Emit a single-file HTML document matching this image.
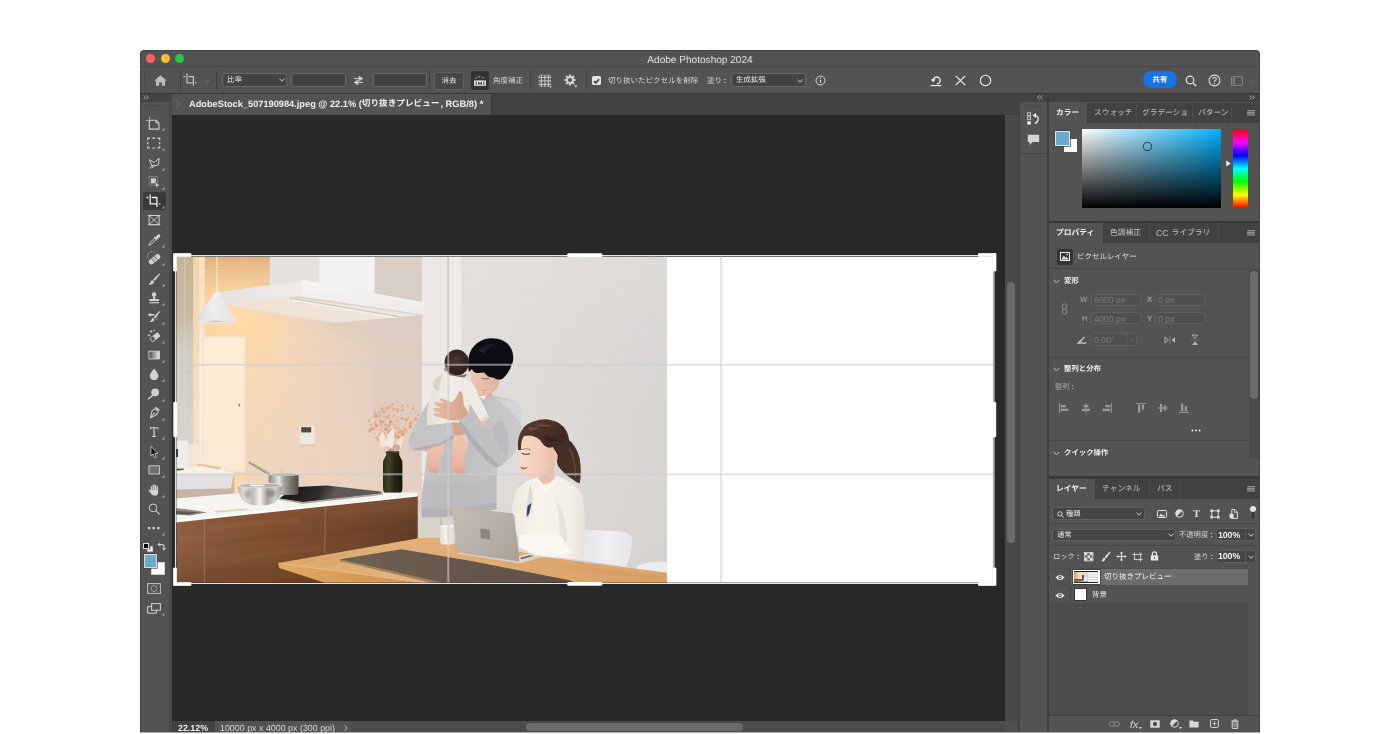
<!DOCTYPE html>
<html lang="ja"><head><meta charset="utf-8"><title>Adobe Photoshop 2024</title>
<style>
html,body{margin:0;padding:0;}
body{width:1400px;height:734px;overflow:hidden;background:#fff;position:relative;
  font-family:"Liberation Sans","Noto Sans CJK JP",sans-serif;font-size:9px;color:#ddd;text-rendering:geometricPrecision;}
body div,body svg{position:absolute;box-sizing:border-box;}
body svg{overflow:visible;}
.r{will-change:transform;display:flex;align-items:center;white-space:nowrap;line-height:1;}
.r.c{justify-content:center;}
.r>svg,.r>span{position:static;flex:none;}
.r>span.j{position:relative;display:block;white-space:nowrap;line-height:1;font-family:"Liberation Sans","Noto Sans CJK JP",sans-serif;}
.fld{background:#454545;border:1px solid #676767;border-radius:2px;}
.sep{width:1px;background:#3e3e3e;}

</style></head>
<body>
<div style="left:140px;top:50px;width:1119.5px;height:700px;background:#535353;border-radius:4.5px 4.5px 0 0;box-shadow:inset 0 0 0 .8px #3f3f3f;"></div><div style="left:145.9px;top:53.8px;width:9px;height:9px;background:#fe5f57;border-radius:50%;"></div><div style="left:160.7px;top:53.8px;width:9px;height:9px;background:#febc2e;border-radius:50%;"></div><div style="left:175.4px;top:53.8px;width:9px;height:9px;background:#28c840;border-radius:50%;"></div><div class="r c" style="left:549.5px;width:300px;top:49.15px;height:20px;"><span id="t1" style="font-size:10.08px;color:#e0e0e0;font-weight:normal;letter-spacing:0px;position:relative;top:1.96px;">Adobe Photoshop 2024</span></div><div style="left:140px;top:66px;width:1119.5px;height:1px;background:#464646;"></div><div style="left:140px;top:93px;width:1119.5px;height:1px;background:#383838;"></div><div style="left:172px;top:94px;width:846px;height:21px;background:#424242;"></div><div style="left:172px;top:94px;width:319px;height:21px;background:#535353;"></div><div style="left:491px;top:94px;width:1px;height:21px;background:#3a3a3a;"></div><svg style="left:176px;top:101px" width="6" height="6" viewBox="0 0 6 6"><path d="M.5 .5L5.5 5.5M5.5 .5L.5 5.5" stroke="#6c6c6c" stroke-width="0.9" fill="none"/></svg><div class="r" style="left:188.8px;top:92.9px;height:20px;"><span id="t2" style="font-size:9.24px;color:#f0f0f0;font-weight:bold;letter-spacing:0px;position:relative;top:1.39px;">AdobeStock_507190984.jpeg @ 22.1% (</span><span class="j" style="width:77.67px;height:8.63px;font-size:8.63px;color:#f0f0f0;font-weight:bold;">切り抜きプレビュー</span><span id="t3" style="font-size:9.3px;color:#f0f0f0;font-weight:bold;letter-spacing:0px;position:relative;top:1.36px;margin-left:1px">, RGB/8) *</span></div><div style="left:172px;top:115px;width:833px;height:606px;background:#282828;"></div><div style="left:172px;top:721px;width:833px;height:11.5px;background:#4a4a4a;"></div><div style="left:172px;top:721px;width:43px;height:11.5px;background:#424242;"></div><div style="left:215px;top:721px;width:136px;height:11.5px;background:#535353;"></div><div class="r" style="left:177.9px;top:717.6px;height:20px;"><span id="t4" style="font-size:8.85px;color:#ececec;font-weight:bold;letter-spacing:0px;position:relative;top:0.71px;">22.12%</span></div><div class="r" style="left:220.4px;top:717.6px;height:20px;"><span id="t5" style="font-size:8.9px;color:#d6d6d6;font-weight:normal;letter-spacing:0px;position:relative;top:-0.04px;">10000 px x 4000 px (300 ppi)</span></div><svg style="left:344px;top:724.6px" width="4" height="6" viewBox="0 0 4 6"><path d="M.8 .5L3 3L.8 5.5" stroke="#ccc" stroke-width="0.9" fill="none"/></svg><div style="left:526px;top:723.2px;width:217px;height:7.6px;background:#6a6a6a;border-radius:4px;"></div><div style="left:1005px;top:115px;width:12.6px;height:617.5px;background:#4a4a4a;"></div><div style="left:1007.2px;top:282px;width:7.7px;height:261px;background:#6a6a6a;border-radius:4px;"></div><div style="left:1005px;top:721px;width:12.6px;height:11.5px;background:#4e4e4e;"></div><svg style="left:0;top:0" width="1400" height="734" viewBox="0 0 1400 734"><defs><clipPath id="pc"><rect x="176" y="256.5" width="491" height="326.5"/></clipPath><filter id="b1" x="-5%" y="-5%" width="110%" height="110%"><feGaussianBlur stdDeviation="0.55"/></filter><filter id="b2" x="-20%" y="-20%" width="140%" height="140%"><feGaussianBlur stdDeviation="1.6"/></filter><filter id="b4" x="-30%" y="-30%" width="160%" height="160%"><feGaussianBlur stdDeviation="4"/></filter><filter id="b8" x="-40%" y="-40%" width="180%" height="180%"><feGaussianBlur stdDeviation="9"/></filter><linearGradient id="wl" gradientUnits="userSpaceOnUse" x1="195" y1="0" x2="424" y2="0"><stop offset="0" stop-color="#f8d3a0"/><stop offset="0.22" stop-color="#fbd9ac"/><stop offset="0.42" stop-color="#f3d6b8"/><stop offset="0.62" stop-color="#ebd2bd"/><stop offset="0.82" stop-color="#e4cebe"/><stop offset="1" stop-color="#ddcbc0"/></linearGradient><radialGradient id="glow" gradientUnits="userSpaceOnUse" cx="236" cy="312" r="60"><stop offset="0" stop-color="#ffdca6" stop-opacity="0.95"/><stop offset="0.6" stop-color="#fdd6a2" stop-opacity="0.5"/><stop offset="1" stop-color="#fdd6a2" stop-opacity="0"/></radialGradient><linearGradient id="topd" gradientUnits="userSpaceOnUse" x1="0" y1="256" x2="0" y2="304"><stop offset="0" stop-color="#c9925a" stop-opacity="0.55"/><stop offset="0.5" stop-color="#d9a56c" stop-opacity="0.28"/><stop offset="1" stop-color="#e8b87e" stop-opacity="0"/></linearGradient><linearGradient id="lowp" gradientUnits="userSpaceOnUse" x1="0" y1="330" x2="0" y2="500"><stop offset="0" stop-color="#eddaca" stop-opacity="0"/><stop offset="1" stop-color="#ecd9ca" stop-opacity="0.35"/></linearGradient><linearGradient id="lowo" gradientUnits="userSpaceOnUse" x1="0" y1="370" x2="0" y2="480"><stop offset="0" stop-color="#ecd2bf" stop-opacity="0"/><stop offset="1" stop-color="#ecd2bf" stop-opacity="0.62"/></linearGradient><linearGradient id="hs" gradientUnits="userSpaceOnUse" x1="330" y1="0" x2="424" y2="0"><stop offset="0" stop-color="#ddd2ca" stop-opacity="0"/><stop offset="1" stop-color="#d9cfc8" stop-opacity="0.6"/></linearGradient><linearGradient id="wr" gradientUnits="userSpaceOnUse" x1="461" y1="0" x2="667" y2="0"><stop offset="0" stop-color="#e2dedb"/><stop offset="0.5" stop-color="#dcd9d6"/><stop offset="1" stop-color="#d7d4d2"/></linearGradient><linearGradient id="wrv" gradientUnits="userSpaceOnUse" x1="0" y1="256" x2="0" y2="583"><stop offset="0" stop-color="#e4e1de" stop-opacity="0.5"/><stop offset="0.5" stop-color="#ddd" stop-opacity="0"/><stop offset="1" stop-color="#cfcbc8" stop-opacity="0.35"/></linearGradient><linearGradient id="wm" gradientUnits="userSpaceOnUse" x1="0" y1="256" x2="0" y2="420"><stop offset="0" stop-color="#d9cfc6"/><stop offset="0.3" stop-color="#d8cdc4"/><stop offset="0.38" stop-color="#dccdc2"/><stop offset="1" stop-color="#e0cdc0"/></linearGradient><linearGradient id="hu" gradientUnits="userSpaceOnUse" x1="228" y1="306" x2="420" y2="318"><stop offset="0" stop-color="#f3e2cd"/><stop offset="0.4" stop-color="#f0e4d8"/><stop offset="1" stop-color="#ebe5df"/></linearGradient><linearGradient id="hl" gradientUnits="userSpaceOnUse" x1="219" y1="0" x2="304" y2="0"><stop offset="0" stop-color="#e6e1dc"/><stop offset="1" stop-color="#efecea"/></linearGradient><linearGradient id="hf" gradientUnits="userSpaceOnUse" x1="0" y1="280" x2="0" y2="315"><stop offset="0" stop-color="#f6f5f4"/><stop offset="1" stop-color="#edebe9"/></linearGradient><linearGradient id="bl" gradientUnits="userSpaceOnUse" x1="0" y1="256" x2="0" y2="445"><stop offset="0" stop-color="#c9b699"/><stop offset="0.3" stop-color="#cabca5"/><stop offset="0.5" stop-color="#d5d0c8"/><stop offset="1" stop-color="#dad7d2"/></linearGradient><pattern id="bs" width="4" height="1.8" patternUnits="userSpaceOnUse"><rect width="4" height=".7" fill="#8b8170" fill-opacity=".13"/></pattern><linearGradient id="st" gradientUnits="userSpaceOnUse" x1="0" y1="256" x2="0" y2="470"><stop offset="0" stop-color="#efd3ab"/><stop offset="0.5" stop-color="#f5ddbc"/><stop offset="1" stop-color="#f3e2d0"/></linearGradient><linearGradient id="dr" gradientUnits="userSpaceOnUse" x1="0" y1="341" x2="0" y2="470"><stop offset="0" stop-color="#feecd3"/><stop offset="1" stop-color="#fbe9d6"/></linearGradient><linearGradient id="lc" gradientUnits="userSpaceOnUse" x1="196" y1="0" x2="236" y2="0"><stop offset="0" stop-color="#dcd8d3"/><stop offset="0.45" stop-color="#f0efee"/><stop offset="1" stop-color="#e6e3e0"/></linearGradient><linearGradient id="vs" gradientUnits="userSpaceOnUse" x1="383" y1="0" x2="402.4" y2="0"><stop offset="0" stop-color="#2c2a19"/><stop offset="0.3" stop-color="#474325"/><stop offset="0.55" stop-color="#2a2817"/><stop offset="1" stop-color="#17160e"/></linearGradient><linearGradient id="wd" gradientUnits="userSpaceOnUse" x1="176" y1="0" x2="418" y2="0"><stop offset="0" stop-color="#8f6044"/><stop offset="0.12" stop-color="#8a5a3c"/><stop offset="0.4" stop-color="#80502f"/><stop offset="0.7" stop-color="#74472b"/><stop offset="1" stop-color="#5f3c27"/></linearGradient><linearGradient id="wdv" gradientUnits="userSpaceOnUse" x1="0" y1="500" x2="0" y2="583"><stop offset="0" stop-color="#a06a45" stop-opacity="0.35"/><stop offset="0.45" stop-color="#7a4a2c" stop-opacity="0"/><stop offset="1" stop-color="#4a2c18" stop-opacity="0.35"/></linearGradient><linearGradient id="hb" gradientUnits="userSpaceOnUse" x1="300" y1="486" x2="330" y2="502"><stop offset="0" stop-color="#1f1d1c"/><stop offset="0.6" stop-color="#2e2c2a"/><stop offset="1" stop-color="#5d5a56"/></linearGradient><linearGradient id="pt" gradientUnits="userSpaceOnUse" x1="268.6" y1="0" x2="298.6" y2="0"><stop offset="0" stop-color="#8e8984"/><stop offset="0.18" stop-color="#b9b5b0"/><stop offset="0.34" stop-color="#e9e7e4"/><stop offset="0.5" stop-color="#aaa6a1"/><stop offset="0.75" stop-color="#77736e"/><stop offset="1" stop-color="#514e4a"/></linearGradient><linearGradient id="bw" gradientUnits="userSpaceOnUse" x1="237" y1="0" x2="283" y2="0"><stop offset="0" stop-color="#b9b4ae"/><stop offset="0.15" stop-color="#dedbd7"/><stop offset="0.35" stop-color="#c3bfb9"/><stop offset="0.5" stop-color="#f1f0ee"/><stop offset="0.66" stop-color="#a7a29c"/><stop offset="0.82" stop-color="#d5d1cc"/><stop offset="1" stop-color="#9a958f"/></linearGradient><linearGradient id="sw" gradientUnits="userSpaceOnUse" x1="408" y1="0" x2="521" y2="0"><stop offset="0" stop-color="#c6c6c8"/><stop offset="0.45" stop-color="#bebec0"/><stop offset="1" stop-color="#cacacc"/></linearGradient><linearGradient id="fc" gradientUnits="userSpaceOnUse" x1="470" y1="0" x2="500" y2="0"><stop offset="0" stop-color="#ecc8b3"/><stop offset="1" stop-color="#deb39b"/></linearGradient><radialGradient id="bh" gradientUnits="userSpaceOnUse" cx="456" cy="360" r="15"><stop offset="0" stop-color="#4a352c"/><stop offset="0.7" stop-color="#33241f"/><stop offset="1" stop-color="#2b1f1b"/></radialGradient><linearGradient id="lg" gradientUnits="userSpaceOnUse" x1="0" y1="436" x2="0" y2="476"><stop offset="0" stop-color="#efc8b3"/><stop offset="0.7" stop-color="#e8b5a2"/><stop offset="1" stop-color="#e19c90"/></linearGradient><linearGradient id="rb" gradientUnits="userSpaceOnUse" x1="427" y1="0" x2="480" y2="0"><stop offset="0" stop-color="#e4dfd6"/><stop offset="0.45" stop-color="#f2eee8"/><stop offset="1" stop-color="#e9e5dd"/></linearGradient><linearGradient id="hd" gradientUnits="userSpaceOnUse" x1="433" y1="0" x2="468" y2="0"><stop offset="0" stop-color="#e5bba1"/><stop offset="1" stop-color="#d6a488"/></linearGradient><linearGradient id="ch" gradientUnits="userSpaceOnUse" x1="582" y1="0" x2="633" y2="0"><stop offset="0" stop-color="#e4e4e7"/><stop offset="0.5" stop-color="#f0f0f2"/><stop offset="1" stop-color="#e6e6e9"/></linearGradient><linearGradient id="hrg" gradientUnits="userSpaceOnUse" x1="520" y1="420" x2="575" y2="480"><stop offset="0" stop-color="#5a3e32"/><stop offset="0.45" stop-color="#402b24"/><stop offset="1" stop-color="#4a3329"/></linearGradient><linearGradient id="bz" gradientUnits="userSpaceOnUse" x1="512" y1="0" x2="585" y2="0"><stop offset="0" stop-color="#efeadf"/><stop offset="0.4" stop-color="#f7f4ec"/><stop offset="0.8" stop-color="#f2eee5"/><stop offset="1" stop-color="#e8e3d9"/></linearGradient><linearGradient id="wf" gradientUnits="userSpaceOnUse" x1="518" y1="0" x2="558" y2="0"><stop offset="0" stop-color="#f7dac8"/><stop offset="0.6" stop-color="#f2cdb8"/><stop offset="1" stop-color="#e6baa4"/></linearGradient><linearGradient id="tb" gradientUnits="userSpaceOnUse" x1="278" y1="0" x2="667" y2="0"><stop offset="0" stop-color="#dca86c"/><stop offset="0.3" stop-color="#e2b27c"/><stop offset="0.6" stop-color="#dda970"/><stop offset="1" stop-color="#d9a066"/></linearGradient><linearGradient id="tf" gradientUnits="userSpaceOnUse" x1="278" y1="0" x2="430" y2="0"><stop offset="0" stop-color="#e2a966"/><stop offset="0.5" stop-color="#d89a56"/><stop offset="1" stop-color="#d39350"/></linearGradient><linearGradient id="pm" gradientUnits="userSpaceOnUse" x1="340" y1="0" x2="560" y2="0"><stop offset="0" stop-color="#6f6053"/><stop offset="0.5" stop-color="#67584c"/><stop offset="1" stop-color="#5c4f45"/></linearGradient><linearGradient id="cp" gradientUnits="userSpaceOnUse" x1="440" y1="0" x2="455.4" y2="0"><stop offset="0" stop-color="#e1ddd4"/><stop offset="0.4" stop-color="#f4f2ec"/><stop offset="1" stop-color="#dcd7cd"/></linearGradient><linearGradient id="lp" gradientUnits="userSpaceOnUse" x1="452" y1="507" x2="520" y2="560"><stop offset="0" stop-color="#c4bcb3"/><stop offset="0.5" stop-color="#b9b1a7"/><stop offset="1" stop-color="#a9a197"/></linearGradient></defs><rect x="176" y="256.5" width="818" height="326.5" fill="#fff"/><g clip-path="url(#pc)"><g filter="url(#b1)"><rect x="176" y="256.5" width="250" height="327" fill="url(#wl)" /><rect x="195" y="256.5" width="140" height="130" fill="url(#glow)" /><rect x="195" y="256.5" width="80" height="50" fill="url(#topd)" /><rect x="244" y="330" width="180" height="170" fill="url(#lowp)" /><rect x="244" y="370" width="110" height="130" fill="url(#lowo)" /><rect x="330" y="300" width="94" height="120" fill="url(#hs)" /><path d="M300.0 318.0L424.0 314.0L424.0 372.0L380.0 350.0Z" fill="#d9c9bd" fill-opacity=".45" filter="url(#b4)"/><rect x="421.8" y="256.5" width="246" height="327" fill="url(#wr)" /><rect x="461" y="256.5" width="206" height="327" fill="url(#wrv)" /><rect x="421.8" y="256.5" width="39.4" height="327" fill="#ebe7e4" /><rect x="447.2" y="256.5" width="1.8" height="327" fill="#d3cfcb" /><rect x="449" y="256.5" width="12" height="327" fill="#eeebe8" /><rect x="374.6" y="256.5" width="47.4" height="170" fill="url(#wm)" /><path d="M269.8 256.5L319.5 256.5L319.5 283.0L303.5 280.0L269.8 284.6Z" fill="#e5e1dd" /><path d="M319.5 256.5L374.6 256.5L374.6 293.0L319.5 283.0Z" fill="#f3f2f1" /><path d="M227.5 305.0L290.0 297.0L424.8 314.9L335.4 322.8Z" fill="url(#hu)" /><path d="M290.0 297.6L398.5 316.0L398.5 317.2L290.0 298.8Z" fill="#c9c6c2" /><path d="M292.0 299.2L398.0 317.4L396.0 318.6L292.0 300.6Z" fill="#f3f1ee" /><path d="M228.7 306.4L335.4 322.4L335.4 323.6L228.7 307.8Z" fill="#e3ddd6" /><path d="M219.0 292.2L303.5 280.0L303.5 295.4L290.0 297.0L227.5 305.0Z" fill="url(#hl)" /><path d="M303.5 280 Q301 280.4 301.2 283 L301.2 296.4 L424.8 314.9 L424.8 302.6 Z" fill="url(#hf)" /><path d="M290.0 297.0L301.2 296.4L424.8 314.9L424.8 316.0L300.0 298.0Z" fill="#d9d5d1" /><rect x="176" y="256.5" width="17.4" height="188.5" fill="url(#bl)" /><rect x="176" y="256.5" width="17.4" height="188.5" fill="none" stroke="none"/><rect x="176" y="256.5" width="17.4" height="188.5" fill="url(#bs)" /><rect x="184.4" y="256.5" width="1" height="188.5" fill="#e5dccd" fill-opacity=".5"/><rect x="193.4" y="256.5" width="11" height="215" fill="url(#st)" /><rect x="199.2" y="256.5" width="5.6" height="215" fill="#f8e6cd" fill-opacity=".8"/><rect x="199.6" y="330" width="2.6" height="141" fill="#f5efe8" fill-opacity=".85"/><rect x="202.6" y="336.6" width="42.6" height="135" fill="#f3e7dc" /><rect x="204.4" y="338.4" width="39" height="131.6" fill="url(#dr)" /><ellipse cx="239.2" cy="405" rx="0.9" ry="1.5" fill="#a68b5c" /><path d="M216.8 256.5V292" stroke="#f3efe9" stroke-width="1.3" stroke-dasharray="2.2 .9" fill="none"/><path d="M216.8 291.6 Q219 291.8 220 293.4 L236.2 320.6 Q236 323.8 216 323.8 Q196.4 323.4 196.2 320.4 L213.8 293.2 Q214.8 291.8 216.8 291.6Z" fill="url(#lc)" /><ellipse cx="216.2" cy="321.6" rx="19.6" ry="2.1" fill="#e9e2e3" /><ellipse cx="216.2" cy="321.4" rx="7" ry="0.7" fill="#d8c4c2" /><rect x="176" y="440.8" width="12.4" height="28.4" fill="#eeedea" rx="1.5"/><rect x="176" y="449" width="2" height="8" fill="#3d3c3a" /><rect x="177" y="468.6" width="7" height="2" fill="#55534f" /><rect x="188.4" y="444" width="12" height="24" fill="#f2e6d6" /><path d="M176.0 471.6L196.0 466.6L233.0 472.4L233.0 474.4L176.0 475.0Z" fill="#f4f0ea" /><path d="M196.0 465.0L199.0 463.6L222.0 467.6L219.0 469.4Z" fill="#e4c79e" /><path d="M176.0 474.4L233.0 473.8L231.0 488.6L176.0 489.6Z" fill="#e2e0e2" /><path d="M176.0 489.6L231.0 488.6L234.0 474.0L234.6 494.0L176.0 499.0Z" fill="#c6b4a6" /><rect x="299.8" y="426" width="14.8" height="18.6" fill="#efe8dd" rx=".8"/><rect x="301.2" y="427.2" width="10" height="5.2" fill="#4b4b49" /><rect x="300.6" y="444.4" width="14" height="1.6" fill="#d8bfa8" fill-opacity=".7"/><g><circle cx="370.8" cy="425.0" r="1.5" fill="#e0a07e" fill-opacity="0.59"/><circle cx="401.6" cy="433.9" r="1.2" fill="#e0a07e" fill-opacity="0.58"/><circle cx="382.0" cy="409.3" r="1.7" fill="#e0a07e" fill-opacity="0.80"/><circle cx="369.2" cy="431.0" r="1.7" fill="#e0a07e" fill-opacity="0.57"/><circle cx="384.3" cy="435.5" r="1.3" fill="#e0a07e" fill-opacity="0.77"/><circle cx="370.8" cy="429.3" r="1.1" fill="#e6ab8b" fill-opacity="0.77"/><circle cx="378.2" cy="439.4" r="1.2" fill="#e2a587" fill-opacity="0.68"/><circle cx="387.4" cy="427.8" r="1.4" fill="#e6ab8b" fill-opacity="0.65"/><circle cx="388.1" cy="405.9" r="1.1" fill="#eabb9f" fill-opacity="0.94"/><circle cx="382.2" cy="411.9" r="1.6" fill="#e6ab8b" fill-opacity="0.72"/><circle cx="370.3" cy="430.8" r="1.1" fill="#db9676" fill-opacity="0.69"/><circle cx="396.9" cy="436.9" r="1.7" fill="#e0a07e" fill-opacity="0.74"/><circle cx="415.7" cy="419.2" r="1.4" fill="#db9676" fill-opacity="0.90"/><circle cx="404.9" cy="430.4" r="0.9" fill="#e2a587" fill-opacity="0.57"/><circle cx="378.7" cy="436.3" r="1.6" fill="#eabb9f" fill-opacity="0.75"/><circle cx="385.8" cy="429.2" r="1.5" fill="#e6ab8b" fill-opacity="0.90"/><circle cx="385.6" cy="426.1" r="1.7" fill="#eabb9f" fill-opacity="0.61"/><circle cx="381.5" cy="433.9" r="1.5" fill="#eabb9f" fill-opacity="0.62"/><circle cx="373.0" cy="428.3" r="1.3" fill="#e2a587" fill-opacity="0.93"/><circle cx="388.4" cy="415.6" r="1.2" fill="#e0a07e" fill-opacity="0.90"/><circle cx="396.8" cy="418.0" r="1.2" fill="#eabb9f" fill-opacity="0.59"/><circle cx="381.6" cy="442.4" r="1.2" fill="#e6ab8b" fill-opacity="0.59"/><circle cx="370.9" cy="429.4" r="0.9" fill="#e2a587" fill-opacity="0.70"/><circle cx="406.6" cy="420.3" r="1.4" fill="#e6ab8b" fill-opacity="0.93"/><circle cx="389.2" cy="434.3" r="1.7" fill="#eabb9f" fill-opacity="0.74"/><circle cx="381.1" cy="441.0" r="1.5" fill="#db9676" fill-opacity="0.74"/><circle cx="390.0" cy="430.8" r="1.1" fill="#e2a587" fill-opacity="0.83"/><circle cx="398.1" cy="428.4" r="1.4" fill="#e0a07e" fill-opacity="0.65"/><circle cx="369.0" cy="420.9" r="1.3" fill="#e2a587" fill-opacity="0.75"/><circle cx="393.8" cy="409.0" r="1.5" fill="#e6ab8b" fill-opacity="0.88"/><circle cx="376.3" cy="425.6" r="1.5" fill="#db9676" fill-opacity="0.95"/><circle cx="388.7" cy="431.5" r="1.7" fill="#e2a587" fill-opacity="0.73"/><circle cx="418.1" cy="415.2" r="0.9" fill="#db9676" fill-opacity="0.59"/><circle cx="381.2" cy="423.4" r="1.6" fill="#e2a587" fill-opacity="0.74"/><circle cx="397.1" cy="436.4" r="1.6" fill="#e0a07e" fill-opacity="0.86"/><circle cx="388.9" cy="432.0" r="0.9" fill="#db9676" fill-opacity="0.93"/><circle cx="384.9" cy="411.6" r="1.5" fill="#e0a07e" fill-opacity="0.62"/><circle cx="394.8" cy="425.5" r="1.3" fill="#e2a587" fill-opacity="0.56"/><circle cx="395.6" cy="435.0" r="1.2" fill="#e6ab8b" fill-opacity="0.90"/><circle cx="380.6" cy="433.9" r="1.3" fill="#db9676" fill-opacity="0.86"/><circle cx="389.5" cy="407.3" r="1.6" fill="#e0a07e" fill-opacity="0.69"/><circle cx="392.0" cy="404.6" r="1.5" fill="#eabb9f" fill-opacity="0.90"/><circle cx="373.7" cy="428.7" r="1.5" fill="#eabb9f" fill-opacity="0.79"/><circle cx="381.4" cy="438.5" r="1.5" fill="#e2a587" fill-opacity="0.77"/><circle cx="388.8" cy="417.8" r="1.6" fill="#e0a07e" fill-opacity="0.57"/><circle cx="380.6" cy="442.2" r="1.3" fill="#eabb9f" fill-opacity="0.85"/><circle cx="384.7" cy="416.6" r="1.3" fill="#e2a587" fill-opacity="0.63"/><circle cx="387.3" cy="408.6" r="1.6" fill="#e2a587" fill-opacity="0.83"/><circle cx="403.2" cy="433.3" r="1.6" fill="#e2a587" fill-opacity="0.63"/><circle cx="385.3" cy="424.9" r="0.9" fill="#db9676" fill-opacity="0.65"/><circle cx="397.3" cy="409.6" r="1.6" fill="#e6ab8b" fill-opacity="0.81"/><circle cx="383.6" cy="436.4" r="1.0" fill="#eabb9f" fill-opacity="0.93"/><circle cx="385.1" cy="402.2" r="0.9" fill="#e6ab8b" fill-opacity="0.72"/><circle cx="384.9" cy="433.0" r="0.9" fill="#db9676" fill-opacity="0.70"/><circle cx="384.9" cy="413.1" r="1.1" fill="#eabb9f" fill-opacity="0.80"/><circle cx="401.0" cy="438.5" r="1.0" fill="#db9676" fill-opacity="0.91"/><circle cx="402.8" cy="409.9" r="1.2" fill="#db9676" fill-opacity="0.76"/><circle cx="388.7" cy="426.4" r="0.9" fill="#db9676" fill-opacity="0.83"/><circle cx="397.1" cy="436.4" r="0.9" fill="#e6ab8b" fill-opacity="0.90"/><circle cx="380.4" cy="420.9" r="1.4" fill="#db9676" fill-opacity="0.57"/><circle cx="415.6" cy="412.0" r="0.8" fill="#db9676" fill-opacity="0.63"/><circle cx="375.9" cy="415.2" r="1.2" fill="#db9676" fill-opacity="0.82"/><circle cx="407.6" cy="405.2" r="0.8" fill="#e0a07e" fill-opacity="0.84"/><circle cx="375.7" cy="428.2" r="0.9" fill="#eabb9f" fill-opacity="0.88"/><circle cx="386.4" cy="407.8" r="1.7" fill="#eabb9f" fill-opacity="0.67"/><circle cx="382.0" cy="435.0" r="1.2" fill="#e6ab8b" fill-opacity="0.69"/><circle cx="382.5" cy="440.8" r="1.2" fill="#db9676" fill-opacity="0.57"/><circle cx="382.8" cy="421.6" r="1.3" fill="#db9676" fill-opacity="0.83"/><circle cx="379.6" cy="434.1" r="1.0" fill="#e0a07e" fill-opacity="0.93"/><circle cx="390.8" cy="429.2" r="1.0" fill="#db9676" fill-opacity="0.62"/><circle cx="377.0" cy="437.0" r="1.0" fill="#e6ab8b" fill-opacity="0.86"/><circle cx="398.2" cy="434.6" r="0.8" fill="#e2a587" fill-opacity="0.56"/><circle cx="375.3" cy="423.3" r="1.6" fill="#e2a587" fill-opacity="0.61"/><circle cx="402.1" cy="418.4" r="1.4" fill="#db9676" fill-opacity="0.75"/><circle cx="393.0" cy="432.9" r="1.4" fill="#e2a587" fill-opacity="0.84"/><circle cx="373.0" cy="428.8" r="1.3" fill="#e2a587" fill-opacity="0.88"/><circle cx="398.4" cy="409.3" r="0.9" fill="#e6ab8b" fill-opacity="0.57"/><circle cx="405.8" cy="430.4" r="1.3" fill="#eabb9f" fill-opacity="0.80"/><circle cx="396.4" cy="420.5" r="1.2" fill="#e0a07e" fill-opacity="0.58"/><circle cx="399.3" cy="437.5" r="0.9" fill="#e2a587" fill-opacity="0.84"/><circle cx="377.1" cy="437.6" r="1.0" fill="#e6ab8b" fill-opacity="0.81"/><circle cx="398.0" cy="437.2" r="1.5" fill="#db9676" fill-opacity="0.80"/><circle cx="379.9" cy="440.2" r="1.4" fill="#db9676" fill-opacity="0.83"/><circle cx="373.7" cy="430.1" r="1.0" fill="#eabb9f" fill-opacity="0.82"/><circle cx="395.2" cy="427.8" r="1.1" fill="#e2a587" fill-opacity="0.74"/><circle cx="410.3" cy="426.7" r="1.7" fill="#db9676" fill-opacity="0.92"/><circle cx="384.2" cy="408.9" r="1.7" fill="#eabb9f" fill-opacity="0.70"/><circle cx="399.7" cy="438.6" r="0.9" fill="#e0a07e" fill-opacity="0.76"/><circle cx="408.5" cy="417.9" r="1.2" fill="#e6ab8b" fill-opacity="0.90"/><circle cx="381.8" cy="413.3" r="1.1" fill="#eabb9f" fill-opacity="0.68"/><circle cx="402.6" cy="431.4" r="0.9" fill="#db9676" fill-opacity="0.71"/><circle cx="401.0" cy="430.6" r="1.6" fill="#e0a07e" fill-opacity="0.66"/><circle cx="381.4" cy="432.5" r="1.1" fill="#e2a587" fill-opacity="0.86"/><circle cx="388.7" cy="437.8" r="1.6" fill="#eabb9f" fill-opacity="0.93"/><circle cx="395.0" cy="436.9" r="1.2" fill="#eabb9f" fill-opacity="0.85"/><circle cx="385.7" cy="438.6" r="0.9" fill="#e2a587" fill-opacity="0.74"/><circle cx="375.9" cy="416.1" r="1.2" fill="#db9676" fill-opacity="0.65"/><circle cx="394.2" cy="434.0" r="0.9" fill="#e6ab8b" fill-opacity="0.75"/><circle cx="390.6" cy="421.5" r="1.7" fill="#db9676" fill-opacity="0.73"/><circle cx="383.2" cy="439.0" r="1.3" fill="#db9676" fill-opacity="0.68"/><circle cx="398.7" cy="432.5" r="1.5" fill="#e0a07e" fill-opacity="0.72"/><circle cx="389.7" cy="424.4" r="1.5" fill="#db9676" fill-opacity="0.75"/><circle cx="379.8" cy="415.8" r="1.4" fill="#e2a587" fill-opacity="0.90"/><circle cx="382.3" cy="432.6" r="1.4" fill="#eabb9f" fill-opacity="0.72"/><circle cx="408.0" cy="406.5" r="0.8" fill="#e6ab8b" fill-opacity="0.83"/><circle cx="386.4" cy="417.1" r="0.9" fill="#e0a07e" fill-opacity="0.92"/><circle cx="389.5" cy="421.0" r="1.0" fill="#eabb9f" fill-opacity="0.59"/><circle cx="388.6" cy="413.1" r="0.9" fill="#eabb9f" fill-opacity="0.86"/><circle cx="371.6" cy="428.3" r="1.4" fill="#e0a07e" fill-opacity="0.67"/><circle cx="375.3" cy="421.1" r="0.9" fill="#e0a07e" fill-opacity="0.67"/><circle cx="379.9" cy="434.2" r="0.8" fill="#e2a587" fill-opacity="0.76"/><circle cx="381.4" cy="430.2" r="1.2" fill="#e6ab8b" fill-opacity="0.64"/><circle cx="412.0" cy="420.9" r="0.8" fill="#db9676" fill-opacity="0.63"/><circle cx="393.5" cy="435.4" r="1.4" fill="#e6ab8b" fill-opacity="0.92"/><circle cx="374.5" cy="437.5" r="1.1" fill="#eabb9f" fill-opacity="0.71"/><circle cx="374.0" cy="412.9" r="1.0" fill="#e0a07e" fill-opacity="0.94"/><circle cx="399.3" cy="431.7" r="1.0" fill="#e6ab8b" fill-opacity="0.91"/><circle cx="394.1" cy="415.7" r="1.2" fill="#e6ab8b" fill-opacity="0.91"/><circle cx="392.8" cy="404.0" r="1.0" fill="#e0a07e" fill-opacity="0.94"/><circle cx="381.6" cy="442.8" r="1.2" fill="#eabb9f" fill-opacity="0.83"/><circle cx="382.1" cy="440.9" r="1.1" fill="#e6ab8b" fill-opacity="0.62"/><circle cx="395.4" cy="437.7" r="1.6" fill="#eabb9f" fill-opacity="0.94"/><circle cx="382.0" cy="441.1" r="1.1" fill="#e0a07e" fill-opacity="0.93"/><circle cx="402.8" cy="435.4" r="1.5" fill="#db9676" fill-opacity="0.67"/><circle cx="390.2" cy="421.7" r="1.1" fill="#db9676" fill-opacity="0.91"/><circle cx="381.3" cy="410.2" r="0.8" fill="#eabb9f" fill-opacity="0.56"/><circle cx="402.6" cy="432.9" r="1.6" fill="#e0a07e" fill-opacity="0.69"/><circle cx="410.2" cy="423.3" r="1.5" fill="#db9676" fill-opacity="0.83"/><circle cx="376.1" cy="416.7" r="1.6" fill="#e2a587" fill-opacity="0.80"/><circle cx="376.9" cy="440.0" r="1.4" fill="#eabb9f" fill-opacity="0.74"/><circle cx="405.8" cy="407.5" r="0.9" fill="#eabb9f" fill-opacity="0.75"/><circle cx="403.7" cy="431.7" r="1.3" fill="#e6ab8b" fill-opacity="0.68"/><circle cx="378.8" cy="412.5" r="1.3" fill="#e0a07e" fill-opacity="0.71"/><circle cx="382.6" cy="416.0" r="1.3" fill="#eabb9f" fill-opacity="0.68"/><circle cx="412.7" cy="408.7" r="1.4" fill="#db9676" fill-opacity="0.63"/><circle cx="418.5" cy="414.8" r="1.0" fill="#e6ab8b" fill-opacity="0.72"/><circle cx="397.4" cy="411.0" r="1.5" fill="#e0a07e" fill-opacity="0.67"/><circle cx="382.1" cy="432.5" r="1.0" fill="#db9676" fill-opacity="0.65"/><circle cx="381.9" cy="426.5" r="1.3" fill="#e6ab8b" fill-opacity="0.64"/><circle cx="397.1" cy="401.8" r="0.8" fill="#e0a07e" fill-opacity="0.90"/><circle cx="386.7" cy="425.2" r="1.0" fill="#db9676" fill-opacity="0.57"/><circle cx="399.1" cy="433.0" r="1.1" fill="#e0a07e" fill-opacity="0.90"/><circle cx="373.3" cy="416.3" r="0.9" fill="#e0a07e" fill-opacity="0.79"/><circle cx="378.6" cy="430.3" r="0.8" fill="#e6ab8b" fill-opacity="0.95"/><circle cx="402.1" cy="405.9" r="1.5" fill="#e0a07e" fill-opacity="0.71"/><circle cx="392.9" cy="435.4" r="1.5" fill="#e0a07e" fill-opacity="0.77"/><circle cx="374.7" cy="433.6" r="0.9" fill="#e2a587" fill-opacity="0.76"/><circle cx="385.8" cy="429.5" r="1.4" fill="#db9676" fill-opacity="0.72"/><circle cx="402.7" cy="407.3" r="1.2" fill="#eabb9f" fill-opacity="0.90"/><circle cx="385.5" cy="432.6" r="1.0" fill="#eabb9f" fill-opacity="0.55"/><circle cx="382.0" cy="409.5" r="1.3" fill="#eabb9f" fill-opacity="0.70"/><circle cx="382.9" cy="441.3" r="1.4" fill="#e6ab8b" fill-opacity="0.91"/><circle cx="393.5" cy="424.5" r="1.0" fill="#e2a587" fill-opacity="0.69"/><circle cx="383.3" cy="440.0" r="1.2" fill="#eabb9f" fill-opacity="0.87"/><circle cx="382.6" cy="437.8" r="1.7" fill="#e0a07e" fill-opacity="0.74"/><circle cx="405.0" cy="429.0" r="1.4" fill="#e2a587" fill-opacity="0.91"/><circle cx="405.9" cy="419.5" r="1.6" fill="#e2a587" fill-opacity="0.88"/><circle cx="378.1" cy="429.4" r="0.9" fill="#e2a587" fill-opacity="0.69"/></g><path d="M392 452Q383.0 428.0 372 404" stroke="#d9a88c" stroke-opacity=".55" stroke-width=".5" fill="none"/><path d="M392 452Q387.0 427.0 380 402" stroke="#d9a88c" stroke-opacity=".55" stroke-width=".5" fill="none"/><path d="M392 452Q393.0 428.0 392 404" stroke="#d9a88c" stroke-opacity=".55" stroke-width=".5" fill="none"/><path d="M392 452Q398.0 430.0 402 408" stroke="#d9a88c" stroke-opacity=".55" stroke-width=".5" fill="none"/><path d="M392 452Q403.0 431.0 412 410" stroke="#d9a88c" stroke-opacity=".55" stroke-width=".5" fill="none"/><path d="M392 452Q406.0 433.0 418 414" stroke="#d9a88c" stroke-opacity=".55" stroke-width=".5" fill="none"/><path d="M392 452Q389.0 435.0 384 418" stroke="#d9a88c" stroke-opacity=".55" stroke-width=".5" fill="none"/><path d="M392 452Q396.0 436.0 398 420" stroke="#d9a88c" stroke-opacity=".55" stroke-width=".5" fill="none"/><path d="M381 447Q377 438 382 431Q387 437 386 447Z" fill="#f1e6d8" /><path d="M386 446Q386 434 393 428Q396 438 392 448Z" fill="#f3eadf" /><path d="M395 446Q400 436 404 436Q403 444 399 450Z" fill="#efe2d4" /><ellipse cx="386.5" cy="449.5" rx="3.2" ry="3" fill="#e9c6bb" /><ellipse cx="396.5" cy="447.5" rx="3.4" ry="3.2" fill="#d8a79f" /><ellipse cx="391" cy="451" rx="3" ry="2.4" fill="#c98f8c" /><path d="M386.4 452Q387 455 384.6 458Q383 460 383 464V488Q383 493.2 386.4 493.4H399Q402.4 493.2 402.4 488V464Q402.4 460 400.8 458Q398.4 455 399 452Z" fill="url(#vs)" /><rect x="386" y="451.2" width="13.4" height="2.2" fill="#3b3820" rx="1"/><path d="M176.0 521.0L417.7 495.6L417.7 583.0L176.0 583.0Z" fill="url(#wd)" /><path d="M176.0 521.0L417.7 495.6L417.7 583.0L176.0 583.0Z" fill="url(#wdv)" /><path d="M210 528Q255.0 522.0 300 520" stroke="#a87650" stroke-opacity="0.35" stroke-width="2.6" fill="none" filter="url(#b2)"/><path d="M206 545Q263.0 536.5 320 532" stroke="#5e3a22" stroke-opacity="0.3" stroke-width="2.6" fill="none" filter="url(#b2)"/><path d="M230 560Q276.0 552.0 322 548" stroke="#a06c46" stroke-opacity="0.25" stroke-width="2.6" fill="none" filter="url(#b2)"/><path d="M330 515Q372.5 508.5 415 506" stroke="#96633f" stroke-opacity="0.3" stroke-width="2.6" fill="none" filter="url(#b2)"/><path d="M330 535Q372.5 526.5 415 522" stroke="#55341f" stroke-opacity="0.3" stroke-width="2.6" fill="none" filter="url(#b2)"/><path d="M208 572Q244.0 567.0 280 566" stroke="#5a371f" stroke-opacity="0.3" stroke-width="2.6" fill="none" filter="url(#b2)"/><path d="M178 540Q190.5 536.5 203 537" stroke="#a87650" stroke-opacity="0.3" stroke-width="2.6" fill="none" filter="url(#b2)"/><path d="M178 560Q190.5 557.0 203 558" stroke="#6a4229" stroke-opacity="0.3" stroke-width="2.6" fill="none" filter="url(#b2)"/><path d="M204.4 518V583" stroke="#b08a72" stroke-opacity=".8" stroke-width=".7"/><path d="M325.4 505.4L324.6 553" stroke="#a88168" stroke-opacity=".8" stroke-width=".7"/><path d="M176.0 498.4L234.0 493.4L417.7 492.6L417.7 495.0L176.0 520.6Z" fill="#f6f4f1" /><path d="M176.0 520.0L417.7 494.4L417.7 496.4L176.0 522.4Z" fill="#fbfaf8" /><path d="M176.0 508.0L196.0 510.4L207.0 512.6L190.0 515.4L176.0 514.6Z" fill="#8e8a84" /><path d="M176.0 511.0L200.0 512.6L188.0 514.6L176.0 514.0Z" fill="#5b5854" /><path d="M214.0 511.0L246.0 508.4L248.0 510.0L217.0 512.8Z" fill="#dfd3c0" /><path d="M296.0 487.0L327.0 485.4L380.4 491.6L382.6 493.6L303.0 502.4L279.0 498.4Z" fill="url(#hb)" /><path d="M279.0 498.2L303.0 502.0L382.6 493.2L382.6 494.8L303.0 503.8L279.0 499.8Z" fill="#aaa6a1" /><path d="M268.6 474.4H298.6V492Q298.6 495 295 495H272Q268.6 495 268.6 492Z" fill="url(#pt)" /><ellipse cx="283.6" cy="474.2" rx="15" ry="1.9" fill="#dedbd7" /><ellipse cx="283.6" cy="474.4" rx="12.6" ry="1.1" fill="#a39f99" /><rect x="280" y="469.6" width="4" height="4" fill="#e1cdb8" rx="1"/><path d="M249.8 462.6L268.8 473.8" stroke="#8d8883" stroke-width="2.2" stroke-linecap="round"/><path d="M250 462.2L268 472.8" stroke="#d8d5d1" stroke-width=".8" stroke-linecap="round"/><path d="M237.6 485.4Q238 497 246 503Q252 505.6 260 505.6Q268 505.6 274 503Q282 497 282.4 485.4Z" fill="url(#bw)" /><ellipse cx="260" cy="485.2" rx="22.6" ry="2.5" fill="#e7e4e0" /><ellipse cx="260" cy="485.5" rx="20" ry="1.7" fill="#b5b0a9" /><ellipse cx="257" cy="485.4" rx="8" ry="1.1" fill="#f1efec" /><ellipse cx="271" cy="493.5" rx="4.6" ry="3.6" fill="#6e6a65" fill-opacity=".6" filter="url(#b2)"/><ellipse cx="248" cy="494" rx="3.2" ry="4" fill="#8a8680" fill-opacity=".5" filter="url(#b2)"/><path d="M418.0 512.0L455.0 512.0L454.0 538.0L418.6 538.0Z" fill="#d9d4ca" /><rect x="440" y="516" width="2.4" height="20" fill="#bdb6aa" fill-opacity=".6"/><path d="M474 397L492 395L508 399L517 402Q521 405 521 412L521 428Q520 445 512 456L501 466L497 468L496.4 509Q470 516 450 516.4Q432 518 422 517.4Q420 500 424 480L427 452L412 449Q407 444 409 438L420 416L433 395L445 388Z" fill="url(#sw)" /><path d="M424 480Q455 490 496.6 476L496.4 509Q470 516 450 516.4Q432 518 422 517.4Q420 500 424 480Z" fill="#b5b6ba" fill-opacity=".45"/><path d="M422 508Q455 512 496.4 502L496.4 509Q460 517 422 517.4Z" fill="#a9aaae" fill-opacity=".5"/><path d="M500 420Q512 430 508 452L501 466L487 462Q498 446 492 428Z" fill="#b3b4b8" fill-opacity=".55"/><path d="M496 398L517 402Q521 405 521 412L521 424Q512 410 496 398Z" fill="#d6d7da" fill-opacity=".8"/><path d="M476 390L492 388L492 396L480 399Z" fill="#d8aa92" /><path d="M478 396.4L487 395L484 399.4Z" fill="#f1f0ee" /><path d="M470 366Q467 362 468.4 358L474 370L500 376Q500.6 387 492 393Q486 397 480 395Q474 392 472 384Q470 376 470 366Z" fill="url(#fc)" /><path d="M480.4 389Q484 391 487.6 389.2Q484 392.2 480.4 389Z" fill="#c47e78" /><path d="M481 378Q485 379.4 489 378.6" fill="none" stroke="#3a2a26" stroke-width=".8" stroke-opacity=".7"/><path d="M468.8 372Q466 355 474 346Q482 337.6 492 338.2Q504 338.4 509.6 346Q514.4 353 512.8 362Q510 372 503 378.4Q498 381 494 378L488 376.4L484 372.4L478 373Q474 373.6 472 369Z" fill="#0c0e13" /><path d="M478 350Q486 342 496 345Q488 347 484 354Z" fill="#1c2733" fill-opacity=".7"/><ellipse cx="456.8" cy="362.6" rx="12.2" ry="13" fill="url(#bh)" /><path d="M447 371Q456 378 467 374Q466 378 458 378.6Q450 378.6 447 371Z" fill="#8a6252" /><ellipse cx="445.8" cy="369" rx="1.6" ry="2.6" fill="#b98a76" /><path d="M428.4 444Q436 440 445 443Q445 452 439 460L438.4 473Q434 475 430 471.6Q426.6 466 428 461Q426.6 452 428.4 444Z" fill="url(#lg)" /><path d="M454.4 432Q462 430 468 436Q469 450 463 460L465.6 474.6Q460 476.4 455 472.6Q449 468 451 464Q452 448 454.4 432Z" fill="url(#lg)" /><path d="M433 383Q437 374 446 374.4L466 378Q474 382 477 392L470 404L466 426L427 425.8Q426 410 430 398Q433 390 433 383Z" fill="url(#rb)" /><path d="M433 383Q436 376 443 375Q439 384 439 391Q434 392 433 383Z" fill="#dad4ca" /><path d="M409 438Q412 430 427.4 425.6L452 422.4L454 434.6L441 442.8L412 449Q407 444 409 438Z" fill="#c4c4c6" /><path d="M412 449L441 442.8L454 434.6L454 437L442 445Q428 450 414 450.6Z" fill="#a9aaae" fill-opacity=".7"/><path d="M451.6 422.4Q460 421 464 427L463.6 434.6Q458 437 454 434.6Z" fill="#d6a58b" /><path d="M468 414.6L460 419.4L458 423.6L471 442.6L487.2 461.8L497 467.4L507 459Q497 440 482 424Z" fill="#c1c1c3" /><path d="M458 423.6L471 442.6L487.2 461.8L497 467.4L499 465Q484 452 474 438Q466 428 460.6 421Z" fill="#a7a8ac" fill-opacity=".7"/><path d="M464 380Q472 381 476 390L488.6 416L481.6 422.6L470 404Q464 394 464 380Z" fill="#f0ece5" /><path d="M487.4 413.6L489.4 417.2L482.4 423.4L480.4 420Z" fill="#e2dcd2" /><ellipse cx="484.2" cy="423.4" rx="3.2" ry="2.4" fill="#e9bfae" /><path d="M459 391.4Q462.6 390.6 462.6 395L464 406Q468.6 412 468 415L460 420Q452 421.6 446 419L436 416.4Q433 415.4 434.4 413.6L441 413.4L434.6 411Q432.4 409.6 434.2 407.8L441 408L435.2 405Q433.6 403.4 435.6 402L444 403L440 400.4Q439.6 398.4 442 398.4L452 402.6Q456.6 398 459 391.4Z" fill="url(#hd)" /><path d="M582 531Q583 529.6 588 529.8L622 531.4Q632 533 632.4 541Q631 556 626 567L582 560Z" fill="url(#ch)" /><path d="M636 566Q650 561 667 562V574H640Z" fill="#ececef" /><path d="M566 438Q576 444 579.6 458Q582 474 579.6 483.6Q576 482 572 479Q564 474 559 467Q564 452 566 438Z" fill="url(#hrg)" /><path d="M569 448Q576 460 575.4 477" fill="none" stroke="#7a5442" stroke-opacity=".6" stroke-width="1.5"/><path d="M541 476Q550 472 560 477Q576 484 583 496Q586 520 583.4 560L540 556L512 530Q510 500 518 488Q526 480 541 476Z" fill="url(#bz)" /><path d="M530 484Q536 500 528 520L526 512Q528 496 530 484Z" fill="#d9d3c6" fill-opacity=".8"/><path d="M527.6 506L531.4 503L529 514L526.4 517Z" fill="#2d3f6a" /><path d="M556 500Q570 520 566 552L560 540Q560 520 556 500Z" fill="#e3ded3" fill-opacity=".7"/><path d="M519 536Q540 528 560 534L572 554L540 557L519 547Z" fill="#f8f6ef" /><path d="M538 470L554 464L555 479Q546 487 538 483Z" fill="#e8c0aa" /><path d="M538 478L546 488L555 478L557 481L546 492L536 481Z" fill="#fbf9f3" /><path d="M521 438Q519.6 443 519.8 448L517.8 457Q518.6 460 520.4 461L520.2 466Q520.6 472 524 475.6Q530 479 538 477Q546 475 551 468L556 458L554 440L540 428L524 430Z" fill="url(#wf)" /><path d="M520.6 466.4Q524 468.4 528.6 466.8Q525 471 520.8 468.6Z" fill="#cf6f70" /><path d="M521.6 453.4Q525.6 455.2 530 453.8" fill="none" stroke="#4a3129" stroke-width="1"/><path d="M521 449.6Q526 447.8 531 449.6" fill="none" stroke="#6a4a3c" stroke-width=".8" stroke-opacity=".7"/><path d="M518 450Q516.5 436 524 427Q534 418.6 548 419.4Q562 421 567 432Q570 440 569 446L559 468Q556 462 556 452L552.6 447Q546 450 540 440Q533 434 524 436Q520.6 440 521 450Z" fill="url(#hrg)" /><path d="M527 428Q540 421 555 427Q541 425 531 432Z" fill="#73503f" fill-opacity=".75"/><path d="M543 436Q556 436 565 444Q556 440 546 441Z" fill="#2f201b" fill-opacity=".6"/><ellipse cx="555.2" cy="457" rx="2.5" ry="4.2" fill="#edc3ad" /><ellipse cx="554.6" cy="464.4" rx="1" ry="1.6" fill="#b9bcc2" /><path d="M531 426L546 428" fill="none" stroke="#201512" stroke-width=".9" stroke-opacity=".7"/><path d="M278.6 563.0L420.0 537.9L455.0 537.4L541.0 556.6L667.0 572.8L667.0 583.4L427.0 583.4Z" fill="url(#tb)" /><path d="M278.6 562.8Q277.6 565 279.3 568L327 583.4L427 583.4Z" fill="url(#tf)" /><path d="M279 563.2L427 583.2" stroke="#efc692" stroke-width="1" stroke-opacity=".8" fill="none"/><path d="M300 562L400 546" stroke="#c98d52" stroke-opacity="0.35" stroke-width="1.4" fill="none" filter="url(#b2)"/><path d="M320 566L345 561" stroke="#b97c45" stroke-opacity="0.35" stroke-width="1.4" fill="none" filter="url(#b2)"/><path d="M470 545L540 560" stroke="#c98d52" stroke-opacity="0.3" stroke-width="1.4" fill="none" filter="url(#b2)"/><path d="M560 566L660 578" stroke="#c4884c" stroke-opacity="0.35" stroke-width="1.4" fill="none" filter="url(#b2)"/><path d="M600 566L667 574" stroke="#e9be8a" stroke-opacity="0.4" stroke-width="1.4" fill="none" filter="url(#b2)"/><path d="M340.0 559.3L401.4 549.3L470.0 560.7L568.3 580.0L578.0 583.4L444.0 583.4L438.6 582.1Z" fill="url(#pm)" /><path d="M340.0 559.3L438.6 582.1L444.0 583.4L434.0 583.4L340.0 561.0Z" fill="#4f433a" fill-opacity=".45"/><path d="M440 526H455.4V541Q455.4 544.4 452 544.4H443.4Q440 544.4 440 541Z" fill="url(#cp)" /><ellipse cx="447.7" cy="526" rx="7.7" ry="1.3" fill="#f6f4ef" /><path d="M453.4 506.8L512 513.2Q514 513.6 514.2 515.6L519.6 561.6L458.4 552.4Q456.8 552 456.6 550.4L452 508.6Q452 506.8 453.4 506.8Z" fill="url(#lp)" /><path d="M480.2 528.4L489.6 529.6L490.2 539.4L480.8 538.2Z" fill="#8d867e" stroke="#a59e95" stroke-width=".5"/><path d="M519.6 561.6L458.4 552.4L458.6 553.8L519.8 563.4L541.0 557.6L540.6 556.0Z" fill="#d5d0ca" /><path d="M519.6 561.6L540.8 555.8L530.0 553.6L518.8 556.0Z" fill="#e3e0dc" /><path d="M520.4 557.4L530.0 555.0L534.0 556.0L521.0 559.4Z" fill="#77736f" /></g></g></svg><svg style="left:0;top:0" width="1400" height="734" viewBox="0 0 1400 734"><path d="M448.3 255.5V583.5" stroke="#cfcfcf" stroke-opacity=".6" stroke-width="2" fill="none"/><path d="M721.2 255.5V583.5" stroke="#cfcfcf" stroke-opacity=".6" stroke-width="2" fill="none"/><path d="M175.5 364.8H994.0" stroke="#cfcfcf" stroke-opacity=".6" stroke-width="2" fill="none"/><path d="M175.5 474.2H994.0" stroke="#cfcfcf" stroke-opacity=".6" stroke-width="2" fill="none"/><rect x="175.5" y="255.5" width="818.5" height="328.0" fill="none" stroke="#2a2a2a" stroke-opacity=".6" stroke-width="2.2"/><rect x="175.5" y="255.5" width="818.5" height="328.0" fill="none" stroke="#e4e4e4" stroke-width="1"/><path d="M173.5 253.5L191.0 253.5L191.0 256.5L176.5 256.5L176.5 271.0L173.5 271.0Z" fill="#fff" stroke="#fff" stroke-width=".7" stroke-linejoin="round"/><path d="M996.0 253.5L978.5 253.5L978.5 256.5L993.0 256.5L993.0 271.0L996.0 271.0Z" fill="#fff" stroke="#fff" stroke-width=".7" stroke-linejoin="round"/><path d="M173.5 585.5L191.0 585.5L191.0 582.5L176.5 582.5L176.5 568.0L173.5 568.0Z" fill="#fff" stroke="#fff" stroke-width=".7" stroke-linejoin="round"/><path d="M996.0 585.5L978.5 585.5L978.5 582.5L993.0 582.5L993.0 568.0L996.0 568.0Z" fill="#fff" stroke="#fff" stroke-width=".7" stroke-linejoin="round"/><rect x="567.0" y="253.3" width="35.6" height="3.8" rx="1.6" fill="#fff"/><rect x="567.0" y="581.9" width="35.6" height="3.8" rx="1.6" fill="#fff"/><rect x="173.3" y="401.7" width="3.8" height="35.6" rx="1.6" fill="#fff"/><rect x="992.4" y="401.7" width="3.8" height="35.6" rx="1.6" fill="#fff"/></svg><div style="left:143.6px;top:72.5px;width:1.4px;height:14.5px;background:repeating-linear-gradient(#454545 0 1px,transparent 1px 2px);"></div><svg style="left:154.3px;top:75.0px;" width="13" height="11" viewBox="0 0 13 11"><path d="M6.5 .3L.2 5.8H2V10.8H5.1V7.4H7.9V10.8H11V5.8H12.8Z" fill="#bdbdbd"/></svg><div style="left:179.5px;top:71px;width:1px;height:19px;background:#404040;"></div><svg style="left:183.3px;top:73.3px;" width="14" height="14" viewBox="0 0 14 14"><path d="M4 .6V9.8H9.6M5.6 3.6H10.4V12.8M.4 3.6H2.2M12.2 9.8H13.6" stroke="#c4c4c4" stroke-width="1.2" fill="none"/></svg><svg style="left:204.0px;top:79.0px;" width="6" height="4" viewBox="0 0 6 4"><path d="M.5 .6L3 3.2L5.5 .6" stroke="#6c6c6c" stroke-width="1" fill="none"/></svg><div style="left:215.6px;top:71px;width:1px;height:19px;background:#404040;"></div><div style="left:222px;top:73px;width:65.2px;height:13.8px;background:#444;border:1px solid #686868;border-radius:2.5px;"></div><div class="r" style="left:227.4px;top:70.0px;height:20px;"><span class="j" style="width:14.80px;height:7.4px;font-size:7.4px;color:#e8e8e8;">比率</span></div><svg style="left:279.4px;top:78.4px;" width="6" height="4" viewBox="0 0 6 4"><path d="M.5 .6L3 3.2L5.5 .6" stroke="#ccc" stroke-width="1" fill="none"/></svg><div style="left:291.3px;top:73px;width:54.5px;height:13.8px;background:#444;border:1px solid #686868;border-radius:2.5px;"></div><svg style="left:353.1px;top:75.5px;" width="11" height="9" viewBox="0 0 11 9"><path d="M1 2.6H8M6.2 .4L9.6 2.6L6.2 4.8Z M10 6.4H3M4.8 4.2L1.4 6.4L4.8 8.6Z" stroke="#d0d0d0" stroke-width="1" fill="#d0d0d0" stroke-linejoin="round"/></svg><div style="left:372.8px;top:73px;width:53.8px;height:13.8px;background:#444;border:1px solid #686868;border-radius:2.5px;"></div><div style="left:429.4px;top:71px;width:1px;height:19px;background:#404040;"></div><div style="left:434.2px;top:71.8px;width:29.6px;height:17.8px;background:#474747;border:1px solid #606060;border-radius:3px;"></div><div class="r c" style="left:299px;width:300px;top:70.6px;height:20px;"><span class="j" style="width:14.80px;height:7.4px;font-size:7.4px;color:#e0e0e0;">消去</span></div><div style="left:471.3px;top:71.4px;width:18.2px;height:18.6px;background:#333;border-radius:2.5px;"></div><svg style="left:473.4px;top:75.5px;" width="14" height="11" viewBox="0 0 14 11"><path d="M1 4.4H13V9.8H1Z" fill="#e2e2e2"/><path d="M3.2 5.2V9M10.8 5.2V9" stroke="#333" stroke-width=".9"/><path d="M5 6.2H9V8.4H5Z" fill="#333"/><path d="M5.6 6.8H8.4" stroke="#e2e2e2" stroke-width=".7"/><path d="M2 2.8C4 .2 10 .2 12 2.8" stroke="#cfcfcf" stroke-width=".9" stroke-dasharray="1.1 1.1" fill="none"/></svg><div class="r" style="left:493px;top:70.6px;height:20px;"><span class="j" style="width:30.00px;height:7.5px;font-size:7.5px;color:#d6d6d6;">角度補正</span></div><div style="left:529.5px;top:71px;width:1px;height:19px;background:#404040;"></div><svg style="left:538.4px;top:73.6px;" width="14" height="14" viewBox="0 0 14 14"><path d="M3.4 .8V13M6.9 .8V13M10.4 .8V13M.6 3.4H13M.6 6.9H13M.6 10.4H13" stroke="#cdcdcd" stroke-width="1" fill="none"/><path d="M1.2 1.2H12.6V12.6H1.2Z" stroke="#cdcdcd" stroke-width=".8" stroke-dasharray="1 1" fill="none"/><path d="M11.4 12.6h2.4l-1.2 1.4z" fill="#cdcdcd"/></svg><svg style="left:563.8px;top:74.2px;" width="12" height="12" viewBox="0 0 12 12"><path d="M9.60 6.00L11.60 6.00" stroke="#d4d4d4" stroke-width="2" /><path d="M8.55 8.55L9.96 9.96" stroke="#d4d4d4" stroke-width="2" /><path d="M6.00 9.60L6.00 11.60" stroke="#d4d4d4" stroke-width="2" /><path d="M3.45 8.55L2.04 9.96" stroke="#d4d4d4" stroke-width="2" /><path d="M2.40 6.00L0.40 6.00" stroke="#d4d4d4" stroke-width="2" /><path d="M3.45 3.45L2.04 2.04" stroke="#d4d4d4" stroke-width="2" /><path d="M6.00 2.40L6.00 0.40" stroke="#d4d4d4" stroke-width="2" /><path d="M8.55 3.45L9.96 2.04" stroke="#d4d4d4" stroke-width="2" /><circle cx="6" cy="6" r="3" fill="none" stroke="#d4d4d4" stroke-width="1.9"/></svg><svg style="left:573.6px;top:85.1px;" width="4" height="3" viewBox="0 0 4 3"><path d="M0 .4h3.6L1.8 2.6z" fill="#d4d4d4"/></svg><div style="left:585.8px;top:71px;width:1px;height:19px;background:#404040;"></div><div style="left:592.3px;top:76.3px;width:8.6px;height:8.6px;background:#e4e4e4;border-radius:1.6px;"></div><svg style="left:593.1px;top:77.6px;" width="7" height="6" viewBox="0 0 7 6"><path d="M1 3.1L2.8 4.9L6 1.2" stroke="#333" stroke-width="1.5" fill="none"/></svg><div class="r" style="left:607.6px;top:70.6px;height:20px;"><span class="j" style="width:90.24px;height:7.52px;font-size:7.52px;color:#d6d6d6;">切り抜いたピクセルを削除</span></div><div class="r" style="left:706.5px;top:70.6px;height:20px;"><span class="j" style="width:15.00px;height:7.5px;font-size:7.5px;color:#d6d6d6;">塗り</span><span id="t6" style="font-size:8px;color:#d6d6d6;font-weight:bold;letter-spacing:0px;margin-left:1.5px">:</span></div><div style="left:730.7px;top:73.2px;width:75px;height:14px;background:#444;border:1px solid #686868;border-radius:2.5px;"></div><div class="r" style="left:736.2px;top:70.4px;height:20px;"><span class="j" style="width:29.80px;height:7.45px;font-size:7.45px;color:#e8e8e8;">生成拡張</span></div><svg style="left:797.4px;top:78.8px;" width="6" height="4" viewBox="0 0 6 4"><path d="M.5 .6L3 3.2L5.5 .6" stroke="#ccc" stroke-width="1" fill="none"/></svg><svg style="left:814.5px;top:75.1px;" width="11" height="11" viewBox="0 0 11 11"><circle cx="5.5" cy="5.5" r="4.5" fill="none" stroke="#d6d6d6" stroke-width="1"/><path d="M5.5 4.8V8" stroke="#d6d6d6" stroke-width="1.1"/><circle cx="5.5" cy="3.3" r=".7" fill="#d6d6d6"/></svg><svg style="left:929.7px;top:73.9px;" width="13" height="13" viewBox="0 0 13 13"><path d="M3.2 6.8A3.5 3.5 0 1 1 6.8 10" stroke="#f2f2f2" stroke-width="1.3" fill="none"/><path d="M.8 5.2H5.6L3.2 8.2Z" fill="#f2f2f2"/><path d="M.6 11.6H11.4" stroke="#f2f2f2" stroke-width="1.1"/></svg><svg style="left:954.8px;top:74.9px;" width="11" height="11" viewBox="0 0 11 11"><path d="M.8 .8L10.2 10.2M10.2 .8L.8 10.2" stroke="#f0f0f0" stroke-width="1.2"/></svg><svg style="left:979.4px;top:73.9px;" width="13" height="13" viewBox="0 0 13 13"><circle cx="6.5" cy="6.5" r="5.2" fill="none" stroke="#f0f0f0" stroke-width="1.1"/></svg><div style="left:1142.6px;top:71.4px;width:34.6px;height:17px;background:#1473e6;border-radius:9px;"></div><div class="r c" style="left:1010px;width:300px;top:70.2px;height:20px;"><span class="j" style="width:14.80px;height:7.4px;font-size:7.4px;color:#fff;font-weight:bold;">共有</span></div><svg style="left:1184.8px;top:74.6px;" width="12" height="12" viewBox="0 0 12 12"><circle cx="5" cy="5" r="3.8" fill="none" stroke="#e0e0e0" stroke-width="1.2"/><path d="M7.8 7.8L11.2 11.2" stroke="#e0e0e0" stroke-width="1.4"/></svg><svg style="left:1208.0px;top:74.1px;" width="13" height="13" viewBox="0 0 13 13"><circle cx="6.5" cy="6.5" r="5.4" fill="none" stroke="#e0e0e0" stroke-width="1.1"/><path d="M4.8 5.2C4.8 3 8.3 3 8.3 5.1C8.3 6.4 6.5 6.4 6.5 7.9" stroke="#e0e0e0" stroke-width="1.1" fill="none"/><circle cx="6.5" cy="9.6" r=".7" fill="#e0e0e0"/></svg><svg style="left:1231.0px;top:75.6px;" width="12" height="10" viewBox="0 0 12 10"><rect x=".5" y=".7" width="11" height="8.6" rx=".4" fill="none" stroke="#868686" stroke-width="1"/><path d="M1.8 2H3.8V8H1.8Z" fill="#868686"/></svg><svg style="left:1250.2px;top:79.0px;" width="6" height="4" viewBox="0 0 6 4"><path d="M.5 .6L3 3.2L5.5 .6" stroke="#666" stroke-width="1" fill="none"/></svg><div style="left:140.5px;top:94px;width:29.5px;height:8px;background:#424242;"></div><div style="left:169px;top:94px;width:3px;height:638.5px;background:#4a4a4a;"></div><svg style="left:143.2px;top:95.3px;" width="6" height="5" viewBox="0 0 6 5"><path d="M.6 .6L2.6 2.5L.6 4.4M3.4 .6L5.4 2.5L3.4 4.4" stroke="#c2c2c2" stroke-width=".8" fill="none"/></svg><div style="left:147px;top:105.2px;width:15px;height:2.2px;background:repeating-linear-gradient(90deg,#484848 0 1px,transparent 1px 2px);"></div><div style="left:143px;top:192.4px;width:23px;height:17.2px;background:#393939;border-radius:2.5px;"></div><svg style="left:147.2px;top:115.9px;" width="14.2" height="14.2" viewBox="0 0 16 16"><path d="M-1 5H1.4M2.8 1.6V3.6" stroke="#d2d2d2" fill="none" stroke-width="1"/><path d="M2.6 4.8H10.4L13.4 7.8V14.8H2.6Z" stroke="#d2d2d2" fill="none" stroke-width="1.25"/><path d="M10.2 5V8H13.2" stroke="#d2d2d2" fill="none" stroke-width="1"/></svg><svg style="left:161.7px;top:128.0px;" width="2.4" height="2.4" viewBox="0 0 2.4 2.4"><path d="M2.4 0V2.4H0Z" fill="#b4b4b4"/></svg><svg style="left:147.2px;top:135.9px;" width="14.2" height="14.2" viewBox="0 0 16 16"><path d="M.8 4.8V2.4H3.4M6 2.4H9.2M11.8 2.4H14.3V4.8M14.3 6.8V9.2M14.3 11.2V13.6H11.8M9.2 13.6H6M3.4 13.6H.8V11.2M.8 9.2V6.8" stroke="#d2d2d2" fill="none" stroke-width="1.25"/></svg><svg style="left:161.7px;top:148.0px;" width="2.4" height="2.4" viewBox="0 0 2.4 2.4"><path d="M2.4 0V2.4H0Z" fill="#b4b4b4"/></svg><svg style="left:147.2px;top:155.6px;" width="14.2" height="14.2" viewBox="0 0 16 16"><path d="M2.6 4.2L8.2 7.4L13.6 2.6L12.8 10.2L5.6 11.4Z" stroke="#d2d2d2" fill="none" stroke-width="1.1" stroke-linejoin="round"/><path d="M7.4 9.6L2.4 14.2M4.8 13.6L8 11.8" stroke="#d2d2d2" fill="none" stroke-width="1"/></svg><svg style="left:161.7px;top:167.7px;" width="2.4" height="2.4" viewBox="0 0 2.4 2.4"><path d="M2.4 0V2.4H0Z" fill="#b4b4b4"/></svg><svg style="left:147.2px;top:174.6px;" width="14.2" height="14.2" viewBox="0 0 16 16"><rect x="2.4" y="1.8" width="9.6" height="9.6" stroke="#d2d2d2" fill="none" stroke-width=".8" stroke-dasharray="1 1"/><rect x="4.4" y="3.8" width="5.6" height="5.6" fill="#d2d2d2"/><path d="M9 7.6L14.6 12L11.8 12.4L10.2 14.8Z" fill="#d2d2d2" stroke="#535353" stroke-width=".5"/></svg><svg style="left:161.7px;top:186.7px;" width="2.4" height="2.4" viewBox="0 0 2.4 2.4"><path d="M2.4 0V2.4H0Z" fill="#b4b4b4"/></svg><svg style="left:147.2px;top:193.9px;" width="14.2" height="14.2" viewBox="0 0 16 16"><path d="M3.6 .5V11.2H10.4M5.4 3.95H11.15V14.6M-.6 3.95H1.5M13.5 11.2H15.1" stroke="#f4f4f4" fill="none" stroke-width="1.45"/></svg><svg style="left:161.7px;top:206.0px;" width="2.4" height="2.4" viewBox="0 0 2.4 2.4"><path d="M2.4 0V2.4H0Z" fill="#b4b4b4"/></svg><svg style="left:147.2px;top:213.1px;" width="14.2" height="14.2" viewBox="0 0 16 16"><rect x="2.4" y="2.8" width="11.2" height="10.4" stroke="#d2d2d2" fill="none" stroke-width="1.1"/><path d="M2.4 2.8L13.6 13.2M13.6 2.8L2.4 13.2M1 2.8H15M1 13.2H15" stroke="#d2d2d2" fill="none" stroke-width=".9"/></svg><svg style="left:147.2px;top:232.9px;" width="14.2" height="14.2" viewBox="0 0 16 16"><path d="M2.2 13.8L3 11.4L8.6 5.8L10.2 7.4L4.6 13Z" stroke="#d2d2d2" fill="none" stroke-width="1.1" stroke-linejoin="round"/><path d="M8 4.4L11.6 8M9.2 6.2L12 2.6Q13.4 1.6 14.2 2.6Q14.8 3.6 13.6 4.6L10.6 7.2" stroke="#d2d2d2" fill="#d2d2d2" stroke-width="1.2"/></svg><svg style="left:161.7px;top:245.0px;" width="2.4" height="2.4" viewBox="0 0 2.4 2.4"><path d="M2.4 0V2.4H0Z" fill="#b4b4b4"/></svg><svg style="left:147.2px;top:251.3px;" width="14.2" height="14.2" viewBox="0 0 16 16"><path d="M1.6 8.6A4.6 4.6 0 0 1 9 2.6" stroke="#d2d2d2" fill="none" stroke-width="1" stroke-dasharray="1.2 1.2"/><g transform="rotate(-38 8.4 9.4)"><rect x="1" y="6.4" width="14.8" height="6" rx="3" fill="#d2d2d2"/><path d="M6.2 6.4V12.4M10.6 6.4V12.4" stroke="#535353" stroke-width=".9"/><circle cx="8.4" cy="8.4" r=".55" fill="#535353"/><circle cx="8.4" cy="10.4" r=".55" fill="#535353"/></g></svg><svg style="left:161.7px;top:263.4px;" width="2.4" height="2.4" viewBox="0 0 2.4 2.4"><path d="M2.4 0V2.4H0Z" fill="#b4b4b4"/></svg><svg style="left:147.2px;top:271.5px;" width="14.2" height="14.2" viewBox="0 0 16 16"><path d="M13.8 1.6Q14.8 1.8 14.4 2.8L8.8 10.2L6.8 8.6Z" fill="#d2d2d2"/><path d="M6.2 9.4L8 10.9Q7.6 13.6 3.6 14.4Q1.8 14.6 2 13.8Q4 12.6 4.2 11Q4.6 9.4 6.2 9.4Z" fill="#d2d2d2"/></svg><svg style="left:161.7px;top:283.6px;" width="2.4" height="2.4" viewBox="0 0 2.4 2.4"><path d="M2.4 0V2.4H0Z" fill="#b4b4b4"/></svg><svg style="left:147.2px;top:290.8px;" width="14.2" height="14.2" viewBox="0 0 16 16"><circle cx="8" cy="4" r="2.6" fill="#d2d2d2"/><path d="M6.8 6H9.2V9H13.4V11.4H2.6V9H6.8Z" fill="#d2d2d2"/><path d="M2.6 13.2H13.4" stroke="#d2d2d2" stroke-width="1.3"/></svg><svg style="left:161.7px;top:302.9px;" width="2.4" height="2.4" viewBox="0 0 2.4 2.4"><path d="M2.4 0V2.4H0Z" fill="#b4b4b4"/></svg><svg style="left:147.2px;top:310.0px;" width="14.2" height="14.2" viewBox="0 0 16 16"><path d="M13.6 1.2Q14.6 1.4 14.2 2.4L9.4 9.6L7.6 8.2Z" fill="#d2d2d2"/><path d="M7 9L8.6 10.3Q8.2 12.8 4.8 13.6Q3.2 13.8 3.4 13Q5 12 5.2 10.6Q5.6 9 7 9Z" fill="#d2d2d2"/><path d="M1 5.4L4.2 3V4.6H8.4V6.2H4.2V7.8Z" fill="#d2d2d2"/><path d="M10.8 8.4Q12 10.6 10.6 12.6" stroke="#d2d2d2" fill="none" stroke-width=".8" stroke-dasharray="1 1"/></svg><svg style="left:161.7px;top:322.1px;" width="2.4" height="2.4" viewBox="0 0 2.4 2.4"><path d="M2.4 0V2.4H0Z" fill="#b4b4b4"/></svg><svg style="left:147.2px;top:328.9px;" width="14.2" height="14.2" viewBox="0 0 16 16"><g transform="rotate(-38 8.6 9.4)"><rect x="3.2" y="6.6" width="11.6" height="5.8" rx="1.2" fill="#d2d2d2"/><rect x="4" y="7.4" width="4" height="4.2" rx=".6" fill="#535353"/></g><path d="M4.6 1.2V4.4M3 2.8H6.2M2.2 6V8.4M1 7.2H3.4M7.8 .8V2.6M6.9 1.7H8.7" stroke="#d2d2d2" fill="none" stroke-width=".9"/></svg><svg style="left:161.7px;top:341.0px;" width="2.4" height="2.4" viewBox="0 0 2.4 2.4"><path d="M2.4 0V2.4H0Z" fill="#b4b4b4"/></svg><svg style="left:0;top:0" width="0" height="0"><defs><linearGradient id="tg"><stop offset="0" stop-color="#4a4a4a"/><stop offset="1" stop-color="#e8e8e8"/></linearGradient></defs></svg><svg style="left:147.2px;top:347.7px;" width="14.2" height="14.2" viewBox="0 0 16 16"><rect x="2.2" y="3.6" width="11.8" height="8.8" fill="url(#tg)" stroke="#d2d2d2" stroke-width="1"/></svg><svg style="left:161.7px;top:359.8px;" width="2.4" height="2.4" viewBox="0 0 2.4 2.4"><path d="M2.4 0V2.4H0Z" fill="#b4b4b4"/></svg><svg style="left:147.2px;top:367.1px;" width="14.2" height="14.2" viewBox="0 0 16 16"><path d="M8 1.6Q12.9 7.4 12.9 10.2A4.9 4.6 0 0 1 3.1 10.2Q3.1 7.4 8 1.6Z" fill="#d2d2d2"/></svg><svg style="left:161.7px;top:379.2px;" width="2.4" height="2.4" viewBox="0 0 2.4 2.4"><path d="M2.4 0V2.4H0Z" fill="#b4b4b4"/></svg><svg style="left:147.2px;top:386.9px;" width="14.2" height="14.2" viewBox="0 0 16 16"><circle cx="9.2" cy="6" r="4.4" fill="#d2d2d2"/><path d="M6.4 9.2L1.2 13.8" stroke="#d2d2d2" stroke-width="1.5"/></svg><svg style="left:161.7px;top:399.0px;" width="2.4" height="2.4" viewBox="0 0 2.4 2.4"><path d="M2.4 0V2.4H0Z" fill="#b4b4b4"/></svg><svg style="left:147.2px;top:405.9px;" width="14.2" height="14.2" viewBox="0 0 16 16"><g transform="rotate(38 8 8)"><path d="M8 14.6L4.6 7.4L5.6 3.6H10.4L11.4 7.4Z" stroke="#d2d2d2" fill="none" stroke-width="1.1" stroke-linejoin="round"/><path d="M8 14V9.2" stroke="#d2d2d2" fill="none" stroke-width=".9"/><circle cx="8" cy="8.4" r="1" fill="#d2d2d2"/><path d="M5.2 1.2H10.8V2.8H5.2Z" fill="#d2d2d2"/></g></svg><svg style="left:161.7px;top:418.0px;" width="2.4" height="2.4" viewBox="0 0 2.4 2.4"><path d="M2.4 0V2.4H0Z" fill="#b4b4b4"/></svg><svg style="left:147.2px;top:424.9px;" width="14.2" height="14.2" viewBox="0 0 16 16"><path d="M3.4 2.6H12.6V5.2H11.6V3.8H8.7V12.4H10.2V13.4H5.8V12.4H7.3V3.8H4.4V5.2H3.4Z" fill="#d2d2d2"/></svg><svg style="left:161.7px;top:437.0px;" width="2.4" height="2.4" viewBox="0 0 2.4 2.4"><path d="M2.4 0V2.4H0Z" fill="#b4b4b4"/></svg><svg style="left:147.2px;top:445.1px;" width="14.2" height="14.2" viewBox="0 0 16 16"><path d="M4.4 1.6L12.4 9.4H8.6L10.6 13.8L8.8 14.6L6.8 10.2L4.4 12.6Z" fill="#111" stroke="#d2d2d2" stroke-width=".9" stroke-linejoin="round"/></svg><svg style="left:161.7px;top:457.2px;" width="2.4" height="2.4" viewBox="0 0 2.4 2.4"><path d="M2.4 0V2.4H0Z" fill="#b4b4b4"/></svg><svg style="left:147.2px;top:462.9px;" width="14.2" height="14.2" viewBox="0 0 16 16"><rect x="2.2" y="3.2" width="11.8" height="9.2" fill="#6e6e6e" stroke="#d2d2d2" stroke-width="1"/></svg><svg style="left:161.7px;top:475.0px;" width="2.4" height="2.4" viewBox="0 0 2.4 2.4"><path d="M2.4 0V2.4H0Z" fill="#b4b4b4"/></svg><svg style="left:147.2px;top:483.2px;" width="14.2" height="14.2" viewBox="0 0 16 16"><g fill="#d2d2d2"><rect x="4.3" y="3.4" width="1.75" height="7" rx=".85"/><rect x="6.45" y="1.6" width="1.75" height="8" rx=".85"/><rect x="8.6" y="1.8" width="1.75" height="8" rx=".85"/><rect x="10.75" y="3.4" width="1.75" height="7" rx=".85"/><path d="M4.3 8H12.5V10.4Q12.5 14.4 8.6 14.4Q6.2 14.4 4.8 12.4L1.8 8.4Q1.6 7.2 2.8 7.2Q3.6 7.4 4.3 8.6Z"/></g></svg><svg style="left:161.7px;top:495.3px;" width="2.4" height="2.4" viewBox="0 0 2.4 2.4"><path d="M2.4 0V2.4H0Z" fill="#b4b4b4"/></svg><svg style="left:147.2px;top:501.9px;" width="14.2" height="14.2" viewBox="0 0 16 16"><circle cx="6.8" cy="6.6" r="4.3" stroke="#d2d2d2" fill="none" stroke-width="1.1"/><path d="M10 9.8L14.2 14" stroke="#d2d2d2" stroke-width="1.3"/></svg><svg style="left:147.2px;top:521.2px;" width="14.2" height="14.2" viewBox="0 0 16 16"><circle cx="2.4" cy="8" r="1.5" fill="#d2d2d2"/><circle cx="7.6" cy="8" r="1.5" fill="#d2d2d2"/><circle cx="12.8" cy="8" r="1.5" fill="#d2d2d2"/></svg><svg style="left:161.7px;top:533.3px;" width="2.4" height="2.4" viewBox="0 0 2.4 2.4"><path d="M2.4 0V2.4H0Z" fill="#b4b4b4"/></svg><div style="left:142.6px;top:542.6px;width:6.6px;height:6.6px;background:#000;border:0.8px solid #ddd;"></div><svg style="left:146.8px;top:545.6px;" width="6" height="6" viewBox="0 0 6 6"><path d="M.4 3.4V5.6H5.6V.4H3.4V3.4Z" fill="#fff" stroke="#ccc" stroke-width=".6"/></svg><div style="left:142.6px;top:542.6px;width:6.8px;height:6.8px;background:#000;border:0.8px solid #ddd;"></div><svg style="left:156.7px;top:541.5px;" width="9" height="9" viewBox="0 0 9 9"><path d="M2.2 2.6H5Q7 2.6 7 4.6V7" stroke="#d2d2d2" fill="none" stroke-width="1.1"/><path d="M2.6 .6L.4 2.6L2.6 4.6ZM5 6.2L7 8.6L9 6.2Z" fill="#d2d2d2"/></svg><div style="left:150.6px;top:562.2px;width:14.4px;height:13.2px;background:#fff;border:0.6px solid #cfcfcf;"></div><div style="left:144px;top:554.2px;width:13.4px;height:14px;background:#6aabcc;border:1px solid #d9d9d9;box-shadow:0 0 0 .6px #444;"></div><svg style="left:146.5px;top:583.3px;" width="14" height="11" viewBox="0 0 14 11"><rect x=".6" y=".6" width="12.8" height="9.8" stroke="#d2d2d2" fill="none" stroke-width="1" stroke-opacity=".85"/><circle cx="7" cy="5.5" r="3" stroke="#d2d2d2" fill="none" stroke-width=".9" stroke-opacity=".6"/></svg><svg style="left:146.5px;top:602.5px;" width="14" height="11" viewBox="0 0 14 11"><rect x="4.6" y=".6" width="8.8" height="6.6" fill="#535353" stroke="#d2d2d2" stroke-width="1"/><path d="M4.6 3.6H.6V10.2H9.4V7.2" stroke="#d2d2d2" fill="none" stroke-width="1"/></svg><svg style="left:161.7px;top:613.4px;" width="2.4" height="2.4" viewBox="0 0 2.4 2.4"><path d="M2.4 0V2.4H0Z" fill="#b4b4b4"/></svg><div style="left:1017.6px;top:94px;width:2px;height:638.5px;background:#434343;"></div><div style="left:1046.7px;top:94px;width:2px;height:638.5px;background:#3e3e3e;"></div><div style="left:1019.6px;top:94px;width:27.1px;height:8px;background:#424242;"></div><div style="left:1048.7px;top:94px;width:210.79999999999995px;height:8.4px;background:#424242;"></div><svg style="left:1037.0px;top:95.3px;" width="6" height="5" viewBox="0 0 6 5"><path d="M2.6 .6L.6 2.5L2.6 4.4M5.4 .6L3.4 2.5L5.4 4.4" stroke="#c2c2c2" stroke-width=".8" fill="none"/></svg><svg style="left:1248.6px;top:95.3px;" width="6" height="5" viewBox="0 0 6 5"><path d="M.6 .6L2.6 2.5L.6 4.4M3.4 .6L5.4 2.5L3.4 4.4" stroke="#c2c2c2" stroke-width=".8" fill="none"/></svg><div style="left:1025.6px;top:105.4px;width:15px;height:2.2px;background:repeating-linear-gradient(90deg,#494949 0 1px,transparent 1px 2px);"></div><div style="left:1019.6px;top:152.6px;width:27.1px;height:1.2px;background:#454545;"></div><svg style="left:1026.0px;top:112.0px;" width="14" height="14" viewBox="0 0 14 14"><rect x="1.6" y=".8" width="3" height="2.8" fill="none" stroke="#d8d8d8" stroke-width=".8"/><rect x="1.6" y="4.9" width="3" height="2.8" fill="none" stroke="#d8d8d8" stroke-width=".8"/><rect x="1.4" y="9.2" width="3.4" height="3.4" fill="#e6e6e6"/><path d="M8.4 3.4Q12.6 3.6 12.2 7.4Q11.8 10.4 8.8 11.6" stroke="#e6e6e6" stroke-width="1.3" fill="none"/><path d="M6.6 3.6L10 .8L10 6Z" fill="#e6e6e6"/></svg><svg style="left:1026.5px;top:134.0px;" width="13" height="12" viewBox="0 0 13 12"><path d="M.8 .8H12.2V8H5.6L2.6 11V8H.8Z" fill="#d6d6d6"/></svg><div style="left:1048.7px;top:102.5px;width:210.79999999999995px;height:20.3px;background:#424242;"></div><div style="left:1048.7px;top:102.5px;width:37.9px;height:21.3px;background:#535353;"></div><div class="r" style="left:1055.6px;top:102.6px;height:20px;"><span class="j" style="width:23.10px;height:7.7px;font-size:7.7px;color:#f2f2f2;font-weight:bold;">カラー</span></div><div class="r" style="left:1093.6px;top:102.6px;height:20px;"><span class="j" style="width:38.50px;height:7.7px;font-size:7.7px;color:#c4c4c4;">スウォッチ</span></div><div class="r" style="left:1142.4px;top:102.6px;height:20px;"><span class="j" style="width:46.20px;height:7.7px;font-size:7.7px;color:#c4c4c4;">グラデーショ</span></div><div class="r" style="left:1198.2px;top:102.6px;height:20px;"><span class="j" style="width:30.80px;height:7.7px;font-size:7.7px;color:#c4c4c4;">パターン</span></div><div style="left:1135.6px;top:102.5px;width:1px;height:20.3px;background:#4c4c4c;"></div><div style="left:1191.5px;top:102.5px;width:1px;height:20.3px;background:#4c4c4c;"></div><div style="left:1231.2px;top:102.5px;width:1px;height:20.3px;background:#4c4c4c;"></div><div style="left:1190.2px;top:104px;width:1.6px;height:18px;background:#424242;"></div><svg style="left:1247.4px;top:109.6px;" width="8" height="6" viewBox="0 0 8 6"><path d="M0 .8H8M0 2.9H8M0 5H8" stroke="#a8a8a8" stroke-width="1.1"/></svg><div style="left:1048.7px;top:221px;width:210.79999999999995px;height:1.8px;background:#383838;"></div><div style="left:1064px;top:139px;width:13.2px;height:13.2px;background:#fff;"></div><div style="left:1055.4px;top:130.6px;width:15px;height:15px;background:#6aabcc;border:1px solid #e6e6e6;box-shadow:0 0 0 .7px #3c3c3c;"></div><div style="left:1082.2px;top:128.5px;width:138.5px;height:79.2px;background:linear-gradient(to top,#000,rgba(0,0,0,0)),linear-gradient(to right,#fff,#00b2ff);"></div><svg style="left:1142.2px;top:141.1px;" width="11" height="11" viewBox="0 0 11 11"><circle cx="5.5" cy="5.5" r="4.1" fill="none" stroke="#1d2a33" stroke-width=".9"/></svg><div style="left:1233.2px;top:128.5px;width:14.5px;height:79.2px;background:linear-gradient(to bottom,#f00 0%,#f0f 16.7%,#00f 33.3%,#0ff 50%,#0f0 66.7%,#ff0 83.3%,#f00 100%);"></div><svg style="left:1226.1px;top:160.1px;" width="5" height="7" viewBox="0 0 5 7"><path d="M.3 .6L4.6 3.5L.3 6.4Z" fill="#f4f4f4"/></svg><div style="left:1048.7px;top:223px;width:210.79999999999995px;height:20.3px;background:#424242;"></div><div style="left:1048.7px;top:223px;width:54.3px;height:21.3px;background:#535353;"></div><div class="r" style="left:1056px;top:223.2px;height:20px;"><span class="j" style="width:38.75px;height:7.75px;font-size:7.75px;color:#f2f2f2;font-weight:bold;">プロパティ</span></div><div class="r" style="left:1109.6px;top:223.2px;height:20px;"><span class="j" style="width:31.00px;height:7.75px;font-size:7.75px;color:#c4c4c4;">色調補正</span></div><div class="r" style="left:1156.2px;top:223.2px;height:20px;"><span id="t7" style="font-size:8.6px;color:#c4c4c4;font-weight:normal;letter-spacing:0px;position:relative;top:0.45px;margin-right:3.2px">CC</span><span class="j" style="width:38.75px;height:7.75px;font-size:7.75px;color:#c4c4c4;">ライブラリ</span></div><div style="left:1149.4px;top:223px;width:1px;height:20.3px;background:#4c4c4c;"></div><div style="left:1218.2px;top:223px;width:1px;height:20.3px;background:#4c4c4c;"></div><svg style="left:1247.4px;top:230.4px;" width="8" height="6" viewBox="0 0 8 6"><path d="M0 .8H8M0 2.9H8M0 5H8" stroke="#a8a8a8" stroke-width="1.1"/></svg><div style="left:1057.2px;top:249px;width:15.6px;height:15.6px;background:#363636;border-radius:2px;"></div><svg style="left:1060.0px;top:252.3px;" width="10" height="9" viewBox="0 0 10 9"><rect x=".5" y=".5" width="9" height="8" fill="none" stroke="#ececec" stroke-width="1"/><path d="M1.4 7.6L3.8 3.6L5.6 6L6.8 4.8L8.6 7.6Z" fill="#ececec"/><circle cx="7.2" cy="2.6" r=".8" fill="#ececec"/></svg><div class="r" style="left:1077.2px;top:247.2px;height:20px;"><span class="j" style="width:60.00px;height:7.5px;font-size:7.5px;color:#dedede;">ピクセルレイヤー</span></div><div style="left:1048.7px;top:268.2px;width:201px;height:1px;background:#474747;"></div><div style="left:1248.6px;top:269.2px;width:10.9px;height:188.5px;background:#4b4b4b;"></div><div style="left:1250px;top:271.4px;width:8.2px;height:128px;background:#6b6b6b;border-radius:4px;"></div><svg style="left:1053.4px;top:279.1px;" width="7" height="5" viewBox="0 0 7 5"><path d="M.6 .8L3.5 3.8L6.4 .8" stroke="#c8c8c8" stroke-width="1" fill="none"/></svg><div class="r" style="left:1064.4px;top:271.4px;height:20px;"><span class="j" style="width:14.80px;height:7.4px;font-size:7.4px;color:#ededed;font-weight:bold;">変形</span></div><div style="left:1091px;top:293.6px;width:49.6px;height:12.2px;background:#4f4f4f;border:1px solid #606060;border-radius:2.5px;"></div><div style="left:1155.4px;top:293.6px;width:49.6px;height:12.2px;background:#4f4f4f;border:1px solid #606060;border-radius:2.5px;"></div><div style="left:1091px;top:312.2px;width:49.6px;height:12.2px;background:#4f4f4f;border:1px solid #606060;border-radius:2.5px;"></div><div style="left:1155.4px;top:312.2px;width:49.6px;height:12.2px;background:#4f4f4f;border:1px solid #606060;border-radius:2.5px;"></div><div class="r" style="left:1080.4px;top:289.9px;height:20px;"><span id="t8" style="font-size:7.8px;color:#8e8e8e;font-weight:bold;letter-spacing:0px;position:relative;top:-0.11px;">W</span></div><div class="r" style="left:1082.2px;top:308.5px;height:20px;"><span id="t9" style="font-size:7.8px;color:#8e8e8e;font-weight:bold;letter-spacing:0px;position:relative;top:0.11px;">H</span></div><div class="r" style="left:1147.2px;top:289.9px;height:20px;"><span id="t10" style="font-size:7.8px;color:#9a9a9a;font-weight:bold;letter-spacing:0px;position:relative;top:-0.14px;">X</span></div><div class="r" style="left:1147.2px;top:308.5px;height:20px;"><span id="t11" style="font-size:7.8px;color:#9a9a9a;font-weight:bold;letter-spacing:0px;position:relative;top:0.16px;">Y</span></div><div class="r" style="left:1093.8px;top:290.0px;height:20px;"><span id="t12" style="font-size:8.8px;color:#7a7a7a;font-weight:normal;letter-spacing:0px;position:relative;top:0.17px;">6000 px</span></div><div class="r" style="left:1093.8px;top:308.6px;height:20px;"><span id="t13" style="font-size:8.8px;color:#7a7a7a;font-weight:normal;letter-spacing:0px;position:relative;top:0.34px;">4000 px</span></div><div class="r" style="left:1158.2px;top:290.0px;height:20px;"><span id="t14" style="font-size:8.8px;color:#7a7a7a;font-weight:normal;letter-spacing:0px;position:relative;top:0.14px;">0 px</span></div><div class="r" style="left:1158.2px;top:308.6px;height:20px;"><span id="t15" style="font-size:8.8px;color:#7a7a7a;font-weight:normal;letter-spacing:0px;position:relative;top:0.34px;">0 px</span></div><svg style="left:1060.9px;top:302.8px;" width="7" height="12" viewBox="0 0 7 12"><rect x="1.4" y=".8" width="4.2" height="5.4" rx="2.1" fill="none" stroke="#8c8c8c" stroke-width="1"/><rect x="1.4" y="5.8" width="4.2" height="5.4" rx="2.1" fill="none" stroke="#8c8c8c" stroke-width="1"/></svg><svg style="left:1076.6px;top:336.2px;" width="10" height="8" viewBox="0 0 10 8"><path d="M9.4 7.2H.9L7.6 1" stroke="#c4c4c4" stroke-width="1.2" fill="none"/><path d="M4.6 7Q4.6 5 3.4 4.2" stroke="#c4c4c4" stroke-width=".9" fill="none"/></svg><div style="left:1091px;top:333.2px;width:46.4px;height:13px;background:#4f4f4f;border:1px solid #606060;border-radius:2.5px;"></div><div style="left:1126.4px;top:334.2px;width:1px;height:11px;background:#606060;"></div><div class="r" style="left:1093.8px;top:330.0px;height:20px;"><span id="t16" style="font-size:8.8px;color:#7a7a7a;font-weight:normal;letter-spacing:0px;position:relative;top:0.19px;">0.00°</span></div><svg style="left:1129.0px;top:338.4px;" width="6" height="4" viewBox="0 0 6 4"><path d="M.5 .6L3 3.2L5.5 .6" stroke="#6e6e6e" stroke-width="1" fill="none"/></svg><svg style="left:1164.0px;top:336.0px;" width="12" height="8" viewBox="0 0 12 8"><path d="M1 1L4.4 4L1 7Z" fill="none" stroke="#b5b5b5" stroke-width=".9"/><path d="M11 1L7.6 4L11 7Z" fill="#b5b5b5"/><path d="M6 0V8" stroke="#8a8a8a" stroke-width=".8"/></svg><svg style="left:1191.4px;top:334.0px;" width="8" height="12" viewBox="0 0 8 12"><path d="M1 1L4 4.4L7 1Z" fill="none" stroke="#b5b5b5" stroke-width=".9"/><path d="M1 11L4 7.6L7 11Z" fill="#b5b5b5"/><path d="M0 6H8" stroke="#8a8a8a" stroke-width=".8" stroke-dasharray="1 .8"/></svg><div style="left:1048.7px;top:356.6px;width:200px;height:1px;background:#474747;"></div><svg style="left:1053.4px;top:367.1px;" width="7" height="5" viewBox="0 0 7 5"><path d="M.6 .8L3.5 3.8L6.4 .8" stroke="#c8c8c8" stroke-width="1" fill="none"/></svg><div class="r" style="left:1064.4px;top:359.4px;height:20px;"><span class="j" style="width:37.00px;height:7.4px;font-size:7.4px;color:#ededed;font-weight:bold;">整列と分布</span></div><div class="r" style="left:1054.8px;top:376.6px;height:20px;"><span class="j" style="width:14.60px;height:7.3px;font-size:7.3px;color:#ababab;">整列</span><span id="t17" style="font-size:8px;color:#ababab;font-weight:bold;letter-spacing:0px;margin-left:1.6px">:</span></div><svg style="left:1059.2px;top:402.5px;" width="10" height="10" viewBox="0 0 10 10"><path d="M.6 0V10" stroke="#9a9a9a" stroke-width="1"/><path d="M1.8 2H6.8V4.2H1.8ZM1.8 5.8H9.4V8H1.8Z" fill="#9a9a9a"/></svg><svg style="left:1080.8px;top:402.5px;" width="10" height="10" viewBox="0 0 10 10"><path d="M5 0V10" stroke="#9a9a9a" stroke-width="1"/><path d="M2.6 2H7.4V4.2H2.6ZM1 5.8H9V8H1Z" fill="#9a9a9a"/></svg><svg style="left:1102.1px;top:402.5px;" width="10" height="10" viewBox="0 0 10 10"><path d="M9.4 0V10" stroke="#9a9a9a" stroke-width="1"/><path d="M3.2 2H8.2V4.2H3.2ZM.6 5.8H8.2V8H.6Z" fill="#9a9a9a"/></svg><svg style="left:1136.0px;top:402.5px;" width="10" height="10" viewBox="0 0 10 10"><path d="M0 .6H10" stroke="#9a9a9a" stroke-width="1"/><path d="M2 1.8H4.2V9.4H2ZM5.8 1.8H8V6.8H5.8Z" fill="#9a9a9a"/></svg><svg style="left:1157.6px;top:402.5px;" width="10" height="10" viewBox="0 0 10 10"><path d="M0 5H10" stroke="#9a9a9a" stroke-width="1"/><path d="M2 1H4.2V9H2ZM5.8 2.6H8V7.4H5.8Z" fill="#9a9a9a"/></svg><svg style="left:1179.4px;top:402.5px;" width="10" height="10" viewBox="0 0 10 10"><path d="M0 9.4H10" stroke="#9a9a9a" stroke-width="1"/><path d="M2 .6H4.2V8.2H2ZM5.8 3.2H8V8.2H5.8Z" fill="#9a9a9a"/></svg><svg style="left:1191.4px;top:428.7px;" width="10" height="3" viewBox="0 0 10 3"><circle cx="1.4" cy="1.5" r="1" fill="#e8e8e8"/><circle cx="5" cy="1.5" r="1" fill="#e8e8e8"/><circle cx="8.6" cy="1.5" r="1" fill="#e8e8e8"/></svg><div style="left:1048.7px;top:439.8px;width:200px;height:1px;background:#474747;"></div><svg style="left:1053.4px;top:451.0px;" width="7" height="5" viewBox="0 0 7 5"><path d="M.6 .8L3.5 3.8L6.4 .8" stroke="#c8c8c8" stroke-width="1" fill="none"/></svg><div class="r" style="left:1064.4px;top:443.3px;height:20px;"><span class="j" style="width:44.40px;height:7.4px;font-size:7.4px;color:#ededed;font-weight:bold;">クイック操作</span></div><div style="left:1048.7px;top:476.2px;width:210.79999999999995px;height:2.4px;background:#383838;"></div><div style="left:1048.7px;top:478.6px;width:210.79999999999995px;height:20.4px;background:#424242;"></div><div style="left:1048.7px;top:478.6px;width:46.3px;height:21.4px;background:#535353;"></div><div class="r" style="left:1056px;top:478.9px;height:20px;"><span class="j" style="width:31.00px;height:7.75px;font-size:7.75px;color:#f2f2f2;font-weight:bold;">レイヤー</span></div><div class="r" style="left:1101.6px;top:478.9px;height:20px;"><span class="j" style="width:38.75px;height:7.75px;font-size:7.75px;color:#c4c4c4;">チャンネル</span></div><div class="r" style="left:1156.6px;top:478.9px;height:20px;"><span class="j" style="width:15.50px;height:7.75px;font-size:7.75px;color:#c4c4c4;">パス</span></div><div style="left:1148.8px;top:478.6px;width:1px;height:20.4px;background:#4c4c4c;"></div><div style="left:1179px;top:478.6px;width:1px;height:20.4px;background:#4c4c4c;"></div><svg style="left:1247.4px;top:486.0px;" width="8" height="6" viewBox="0 0 8 6"><path d="M0 .8H8M0 2.9H8M0 5H8" stroke="#a8a8a8" stroke-width="1.1"/></svg><div style="left:1051.8px;top:507.2px;width:92.8px;height:13px;background:#454545;border:1px solid #5e5e5e;border-radius:2.5px;"></div><svg style="left:1057.3px;top:510.5px;" width="7" height="7" viewBox="0 0 7 7"><circle cx="2.9" cy="2.9" r="2.2" fill="none" stroke="#e0e0e0" stroke-width=".9"/><path d="M4.6 4.6L6.6 6.6" stroke="#e0e0e0" stroke-width="1"/></svg><div class="r" style="left:1066.4px;top:503.9px;height:20px;"><span class="j" style="width:14.60px;height:7.3px;font-size:7.3px;color:#e8e8e8;">種類</span></div><svg style="left:1136.0px;top:512.4px;" width="6" height="4" viewBox="0 0 6 4"><path d="M.5 .6L3 3.2L5.5 .6" stroke="#ccc" stroke-width="1" fill="none"/></svg><svg style="left:1156.7px;top:509.9px;" width="10" height="8" viewBox="0 0 10 8"><rect x=".5" y=".5" width="9" height="7" rx=".8" fill="none" stroke="#dedede" stroke-width="1"/><path d="M1.8 6.4L3.8 3.4L5.2 5.2L6.2 4.4L8 6.4Z" fill="#dedede"/></svg><svg style="left:1175.1px;top:509.4px;" width="9" height="9" viewBox="0 0 9 9"><circle cx="4.5" cy="4.5" r="3.8" fill="none" stroke="#dedede" stroke-width="1"/><path d="M1.8 7.2A3.8 3.8 0 0 1 7.2 1.8Z" fill="#dedede"/></svg><div class="r" style="left:1193.2px;top:504.0px;height:20px;"><span id="t18" style="font-size:10.5px;color:#dedede;font-weight:bold;letter-spacing:0px;position:relative;top:1.39px;font-family:'Liberation Serif',serif">T</span></div><svg style="left:1210.0px;top:508.9px;" width="10" height="10" viewBox="0 0 10 10"><rect x="1.8" y="1.8" width="6.4" height="6.4" fill="none" stroke="#dedede" stroke-width="1"/><path d="M.4 .4H3V3H.4ZM7 .4H9.6V3H7ZM.4 7H3V9.6H.4ZM7 7H9.6V9.6H7Z" fill="#dedede"/></svg><svg style="left:1228.5px;top:508.9px;" width="9" height="10" viewBox="0 0 9 10"><path d="M2.8 .6H6L8.4 3V9.4H2.8Z" fill="none" stroke="#dedede" stroke-width="1"/><path d="M.6 4.8H4.6V9.4H.6Z" fill="#dedede"/><path d="M5.6 .8V3.4H8.2" fill="none" stroke="#dedede" stroke-width=".8"/></svg><div style="left:1250.2px;top:507.6px;width:6px;height:12.2px;background:#3d3d3d;border-radius:3px;border:.6px solid #5e5e5e;"></div><div style="left:1250.2px;top:505.6px;width:6px;height:6px;background:#e8e8e8;border-radius:50%;"></div><div style="left:1048.7px;top:523px;width:210.79999999999995px;height:1px;background:#494949;"></div><div style="left:1048.7px;top:545px;width:210.79999999999995px;height:1px;background:#494949;"></div><div style="left:1051.8px;top:528.6px;width:124.6px;height:12.6px;background:#454545;border:1px solid #5e5e5e;border-radius:2.5px;"></div><div class="r" style="left:1056.6px;top:525.0px;height:20px;"><span class="j" style="width:14.60px;height:7.3px;font-size:7.3px;color:#e8e8e8;">通常</span></div><svg style="left:1168.0px;top:533.4px;" width="6" height="4" viewBox="0 0 6 4"><path d="M.5 .6L3 3.2L5.5 .6" stroke="#ccc" stroke-width="1" fill="none"/></svg><div class="r" style="left:1178.8px;top:525.0px;height:20px;"><span class="j" style="width:29.20px;height:7.3px;font-size:7.3px;color:#d6d6d6;">不透明度</span><span id="t19" style="font-size:8px;color:#d6d6d6;font-weight:bold;letter-spacing:0px;margin-left:2px">:</span></div><div style="left:1215.6px;top:528.2px;width:40.2px;height:13.2px;background:#454545;border:1px solid #5e5e5e;border-radius:2.5px;"></div><div style="left:1244.8px;top:529.0px;width:1px;height:11.6px;background:#5a5a5a;"></div><div class="r" style="left:1218.4px;top:525.1px;height:20px;"><span id="t20" style="font-size:8.8px;color:#f2f2f2;font-weight:bold;letter-spacing:-0.1px;position:relative;top:0.57px;">100%</span></div><svg style="left:1247.8px;top:533.4px;" width="6" height="4" viewBox="0 0 6 4"><path d="M.5 .6L3 3.2L5.5 .6" stroke="#ccc" stroke-width="1" fill="none"/></svg><div class="r" style="left:1053px;top:546.8px;height:20px;"><span class="j" style="width:21.90px;height:7.3px;font-size:7.3px;color:#d6d6d6;">ロック</span><span id="t21" style="font-size:8px;color:#d6d6d6;font-weight:bold;letter-spacing:0px;margin-left:2.2px">:</span></div><svg style="left:1084.3px;top:552.1px;" width="9.4" height="9.4" viewBox="0 0 9.4 9.4"><rect x="0.8" y="0.8" width="2.6" height="2.6" fill="#e4e4e4"/><rect x="3.4" y="0.8" width="2.6" height="2.6" fill="#777"/><rect x="6.0" y="0.8" width="2.6" height="2.6" fill="#e4e4e4"/><rect x="0.8" y="3.4" width="2.6" height="2.6" fill="#777"/><rect x="3.4" y="3.4" width="2.6" height="2.6" fill="#e4e4e4"/><rect x="6.0" y="3.4" width="2.6" height="2.6" fill="#777"/><rect x="0.8" y="6.0" width="2.6" height="2.6" fill="#e4e4e4"/><rect x="3.4" y="6.0" width="2.6" height="2.6" fill="#777"/><rect x="6.0" y="6.0" width="2.6" height="2.6" fill="#e4e4e4"/><rect x=".5" y=".5" width="8.4" height="8.4" fill="none" stroke="#e4e4e4" stroke-width=".8"/></svg><svg style="left:1100.8px;top:551.1px;" width="10" height="11" viewBox="0 0 10 11"><path d="M8.6 .6Q9.6 .8 9.2 1.8L5 7.4L3.6 6.2Z" fill="#e8e8e8"/><path d="M3.2 6.8L4.4 7.9Q4.2 9.8 1.6 10.4Q.4 10.6.6 10Q1.8 9.2 2 8Q2.2 6.8 3.2 6.8Z" fill="#e8e8e8"/></svg><svg style="left:1115.5px;top:551.3px;" width="11" height="11" viewBox="0 0 11 11"><path d="M5.5 .4L7.2 2.4H6.1V4.9H8.6V3.8L10.6 5.5L8.6 7.2V6.1H6.1V8.6H7.2L5.5 10.6L3.8 8.6H4.9V6.1H2.4V7.2L.4 5.5L2.4 3.8V4.9H4.9V2.4H3.8Z" fill="#e0e0e0"/></svg><svg style="left:1132.1px;top:551.8px;" width="11" height="10" viewBox="0 0 11 10"><path d="M2.6 .4V8M.4 2.4H8.6V9.6M2.6 7.6H10.6" stroke="#dedede" stroke-width=".9" fill="none"/><path d="M7.4 .8L10.2 2.6" stroke="#dedede" stroke-width=".9"/></svg><svg style="left:1149.5px;top:551.4px;" width="9" height="10" viewBox="0 0 9 10"><path d="M2.4 4.4V3Q2.4 .8 4.5 .8Q6.6 .8 6.6 3V4.4" stroke="#e8e8e8" stroke-width="1.2" fill="none"/><rect x=".8" y="4.2" width="7.4" height="5.4" rx=".6" fill="#e8e8e8"/><rect x="4" y="5.8" width="1" height="2" fill="#535353"/></svg><div class="r" style="left:1194px;top:546.8px;height:20px;"><span class="j" style="width:14.60px;height:7.3px;font-size:7.3px;color:#d6d6d6;">塗り</span><span id="t22" style="font-size:8px;color:#d6d6d6;font-weight:bold;letter-spacing:0px;margin-left:2px">:</span></div><div style="left:1215.6px;top:549.6px;width:40.2px;height:13.2px;background:#454545;border:1px solid #5e5e5e;border-radius:2.5px;"></div><div style="left:1244.8px;top:550.4px;width:1px;height:11.6px;background:#5a5a5a;"></div><div class="r" style="left:1218.4px;top:546.5px;height:20px;"><span id="t23" style="font-size:8.8px;color:#f2f2f2;font-weight:bold;letter-spacing:-0.1px;position:relative;top:-0.23px;">100%</span></div><svg style="left:1247.8px;top:554.8px;" width="6" height="4" viewBox="0 0 6 4"><path d="M.5 .6L3 3.2L5.5 .6" stroke="#ccc" stroke-width="1" fill="none"/></svg><div style="left:1048.7px;top:567.6px;width:199.4px;height:147px;background:#4d4d4d;"></div><div style="left:1048.7px;top:568.6px;width:199.4px;height:16.4px;background:#535353;"></div><div style="left:1071.4px;top:568.6px;width:176.7px;height:16.4px;background:#6c6c6c;"></div><div style="left:1048.7px;top:586px;width:199.4px;height:17.4px;background:#535353;"></div><div style="left:1070.4px;top:568.6px;width:1px;height:34.8px;background:#474747;"></div><svg style="left:1055.0px;top:573.7px;" width="10" height="7" viewBox="0 0 10 7"><path d="M.4 3.5Q5 -1.6 9.6 3.5Q5 8.6 .4 3.5Z" fill="#ececec"/><circle cx="5" cy="3.5" r="1.7" fill="#535353"/><circle cx="5" cy="3.5" r=".8" fill="#ececec"/></svg><svg style="left:1055.0px;top:591.5px;" width="10" height="7" viewBox="0 0 10 7"><path d="M.4 3.5Q5 -1.6 9.6 3.5Q5 8.6 .4 3.5Z" fill="#ececec"/><circle cx="5" cy="3.5" r="1.7" fill="#535353"/><circle cx="5" cy="3.5" r=".8" fill="#ececec"/></svg><div style="left:1072.6px;top:569.8px;width:27px;height:14.2px;background:#fff;box-shadow:0 0 0 .6px #2c2c2c;"></div><div style="left:1073.8px;top:571px;width:24.6px;height:11.8px;background:#222;"></div><div style="left:1074.4px;top:571.6px;width:23.4px;height:10.6px;background:repeating-conic-gradient(#cfcfcf 0 25%,#fff 0 50%) 0 0/2.6px 2.6px;"></div><div style="left:1074.4px;top:571.6px;width:14px;height:10.6px;background:linear-gradient(90deg,#d8a26a,#f3d9b8 40%,#e6dcd4 62%,#d9d6d3);"></div><div style="left:1074.4px;top:578.6px;width:8.6px;height:3.6px;background:#8a5a3a;"></div><div style="left:1081.6px;top:575.4px;width:2.6px;height:5px;background:#555a66;"></div><div style="left:1084px;top:577px;width:3px;height:4.4px;background:#efeae0;"></div><div style="left:1077px;top:580.6px;width:11.4px;height:1.6px;background:#d29a60;"></div><div class="r" style="left:1103.9px;top:567.2px;height:20px;"><span class="j" style="width:67.50px;height:7.5px;font-size:7.5px;color:#f0f0f0;">切り抜きプレビュー</span></div><div style="left:1074.8px;top:589.2px;width:11.2px;height:11px;background:#fff;box-shadow:0 0 0 .7px #2c2c2c;"></div><div class="r" style="left:1091.8px;top:585.0px;height:20px;"><span class="j" style="width:14.80px;height:7.4px;font-size:7.4px;color:#e2e2e2;">背景</span></div><div style="left:1048.7px;top:714.6px;width:210.79999999999995px;height:1px;background:#404040;"></div><svg style="left:1108.8px;top:720.9px;" width="11" height="6" viewBox="0 0 11 6"><rect x=".5" y=".8" width="5.4" height="4.4" rx="2.2" fill="none" stroke="#8a8a8a" stroke-width="1"/><rect x="5.1" y=".8" width="5.4" height="4.4" rx="2.2" fill="none" stroke="#8a8a8a" stroke-width="1"/></svg><div class="r" style="left:1129.6px;top:714.2px;height:20px;"><span id="t24" style="font-size:10.4px;color:#d8d8d8;font-weight:normal;letter-spacing:0px;position:relative;top:1.97px;font-style:italic;">fx</span></div><svg style="left:1138.5px;top:727.4px;" width="3" height="2.4" viewBox="0 0 3 2.4"><path d="M0 0H3L1.5 2.2Z" fill="#d8d8d8"/></svg><svg style="left:1149.5px;top:719.8px;" width="10" height="8" viewBox="0 0 10 8"><rect x=".3" y=".3" width="9.4" height="7.4" fill="#d8d8d8"/><circle cx="5" cy="4" r="2.2" fill="#535353"/></svg><svg style="left:1169.9px;top:719.3px;" width="9" height="9" viewBox="0 0 9 9"><circle cx="4.5" cy="4.5" r="3.8" fill="none" stroke="#d8d8d8" stroke-width="1"/><path d="M1.8 7.2A3.8 3.8 0 0 1 7.2 1.8Z" fill="#d8d8d8"/></svg><svg style="left:1178.9px;top:727.4px;" width="3" height="2.4" viewBox="0 0 3 2.4"><path d="M0 0H3L1.5 2.2Z" fill="#d8d8d8"/></svg><svg style="left:1189.3px;top:719.8px;" width="10" height="8" viewBox="0 0 10 8"><path d="M.4 .6H3.8L4.8 1.8H9.6V7.6H.4Z" fill="#d8d8d8"/></svg><svg style="left:1209.9px;top:719.3px;" width="9" height="9" viewBox="0 0 9 9"><rect x=".6" y=".6" width="7.8" height="7.8" rx=".8" fill="none" stroke="#d8d8d8" stroke-width="1"/><path d="M4.5 2.6V6.4M2.6 4.5H6.4" stroke="#d8d8d8" stroke-width="1"/></svg><svg style="left:1230.5px;top:718.6px;" width="8" height="10" viewBox="0 0 8 10"><path d="M.4 2H7.6M2.8 2V.8H5.2V2" stroke="#d8d8d8" stroke-width=".9" fill="none"/><path d="M1.2 2.8H6.8V9.4H1.2Z" fill="none" stroke="#d8d8d8" stroke-width="1"/><path d="M3 4V8.2M5 4V8.2" stroke="#d8d8d8" stroke-width=".8"/></svg><svg style="left:100px;top:730px" width="1200" height="4" viewBox="0 0 1200 4"><rect x="0" y="2.45" width="1200" height="2" fill="#fff"/></svg>
</body></html>
